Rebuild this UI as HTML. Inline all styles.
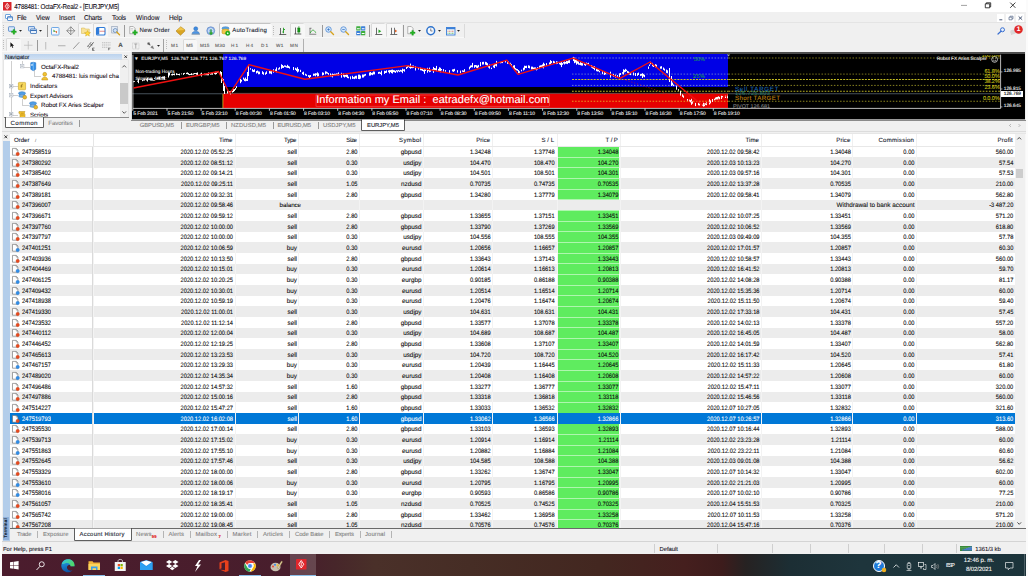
<!DOCTYPE html>
<html><head><meta charset="utf-8"><title>4788481: OctaFX-Real2 - [EURJPY,M5]</title>
<style>
html,body{margin:0;padding:0;width:1028px;height:576px;overflow:hidden;background:#f0f0f0}
body{position:relative;font-family:"Liberation Sans",sans-serif;text-rendering:geometricPrecision}
span{position:absolute;white-space:pre;-webkit-text-stroke:0.09px}
svg{position:absolute;overflow:visible}
</style></head><body>
<div style="position:absolute;left:0.00px;top:0.00px;width:1028.00px;height:12.00px;background:#fff;"></div>
<svg style="left:3px;top:1.5px" width="8.5" height="8.5" viewBox="0 0 17 17"><rect width="17" height="17" rx="1" fill="#d8262c"/><path d="M8.5 2.5 L12.5 8.5 L8.5 14.5 L4.5 8.5 Z" fill="none" stroke="#fff" stroke-width="1.6"/><path d="M8.5 5.5 L8.5 11.5" stroke="#fff" stroke-width="1.4"/></svg>
<span style="left:14.30px;top:3.50px;font-size:6.3px;line-height:8px;color:#15101c;transform:scaleY(1.13);letter-spacing:-0.203px;">4788481: OctaFX-Real2 - [EURJPY,M5]</span>
<svg style="left:955px;top:0" width="73" height="12" viewBox="0 0 73 12"><path d="M6 5.4h6" stroke="#8a8a8a" stroke-width="0.8"/><path d="M30.3 3.8h4.4v4h-4.4z M31.3 3.8v-1h4.4v4h-1" fill="none" stroke="#111" stroke-width="0.8"/><path d="M55.2 2.6l5.2 5.2M60.4 2.6l-5.2 5.2" stroke="#111" stroke-width="0.8"/></svg>
<div style="position:absolute;left:0.00px;top:12.00px;width:1028.00px;height:10.50px;background:#f0f0f0;"></div>
<div style="position:absolute;left:0.00px;top:22.20px;width:1028.00px;height:0.60px;background:#e4e4e4;"></div>
<svg style="left:4.5px;top:13.5px" width="8" height="7" viewBox="0 0 16 14"><rect x="1" y="1" width="10" height="8" rx="1" fill="#fff" stroke="#4f8fd6" stroke-width="1.6"/><rect x="5" y="5" width="10" height="8" rx="1" fill="#fff" stroke="#3b78c4" stroke-width="1.6"/><path d="M5 7.5h10" stroke="#3b78c4" stroke-width="1.6"/></svg>
<span style="left:17.00px;top:15.20px;font-size:6.5px;line-height:8px;color:#15101c;transform:scaleY(1.08);letter-spacing:-0.258px;">File</span>
<span style="left:36.00px;top:15.20px;font-size:6.5px;line-height:8px;color:#15101c;transform:scaleY(1.08);letter-spacing:-0.124px;">View</span>
<span style="left:59.00px;top:15.20px;font-size:6.5px;line-height:8px;color:#15101c;transform:scaleY(1.08);letter-spacing:-0.051px;">Insert</span>
<span style="left:84.00px;top:15.20px;font-size:6.5px;line-height:8px;color:#15101c;transform:scaleY(1.08);letter-spacing:-0.229px;">Charts</span>
<span style="left:112.00px;top:15.20px;font-size:6.5px;line-height:8px;color:#15101c;transform:scaleY(1.08);letter-spacing:-0.294px;">Tools</span>
<span style="left:136.00px;top:15.20px;font-size:6.5px;line-height:8px;color:#15101c;transform:scaleY(1.08);letter-spacing:0.076px;">Window</span>
<span style="left:169.00px;top:15.20px;font-size:6.5px;line-height:8px;color:#15101c;transform:scaleY(1.08);letter-spacing:-0.123px;">Help</span>
<div style="position:absolute;left:996.50px;top:13.50px;width:7.80px;height:8.00px;background:#fff;"></div>
<div style="position:absolute;left:1006.20px;top:13.50px;width:7.80px;height:8.00px;background:#fff;"></div>
<div style="position:absolute;left:1016.00px;top:13.50px;width:7.80px;height:8.00px;background:#fff;"></div>
<svg style="left:996.5px;top:13.5px" width="28" height="8" viewBox="0 0 28 8"><path d="M2.3 5.8h3" stroke="#3a4a6a" stroke-width="0.9"/><path d="M12 3.2h3v2.6h-3z M13 3.2v-1h3v2.6h-1" fill="none" stroke="#5a6a8a" stroke-width="0.7"/><path d="M21.6 2.4l3.6 3.4M25.2 2.4l-3.6 3.4" stroke="#3a4a6a" stroke-width="0.9"/></svg>
<div style="position:absolute;left:0.00px;top:23.20px;width:1028.00px;height:29.00px;background:#f0f0f0;"></div>
<div style="position:absolute;left:3px;top:25px;width:1px;height:11px;background:repeating-linear-gradient(#bcbcbc 0 1px,transparent 1px 2.1px)"></div>
<div style="position:absolute;left:3px;top:40px;width:1px;height:10px;background:repeating-linear-gradient(#bcbcbc 0 1px,transparent 1px 2.1px)"></div>
<div style="position:absolute;left:79.00px;top:24.30px;width:13.00px;height:12.60px;background:#f7f7f7;box-shadow:-0.5px -0.5px 0 0 #c4c4c4,0.5px 0.5px 0 0 #fdfdfd;"></div>
<div style="position:absolute;left:94.00px;top:24.30px;width:12.60px;height:12.60px;background:#f7f7f7;box-shadow:-0.5px -0.5px 0 0 #c4c4c4,0.5px 0.5px 0 0 #fdfdfd;"></div>
<div style="position:absolute;left:290.50px;top:24.30px;width:13.50px;height:12.60px;background:#f7f7f7;box-shadow:-0.5px -0.5px 0 0 #c4c4c4,0.5px 0.5px 0 0 #fdfdfd;"></div>
<div style="position:absolute;left:371.50px;top:24.30px;width:13.50px;height:12.60px;background:#f7f7f7;box-shadow:-0.5px -0.5px 0 0 #c4c4c4,0.5px 0.5px 0 0 #fdfdfd;"></div>
<div style="position:absolute;left:387.00px;top:24.30px;width:13.50px;height:12.60px;background:#f7f7f7;box-shadow:-0.5px -0.5px 0 0 #c4c4c4,0.5px 0.5px 0 0 #fdfdfd;"></div>
<div style="position:absolute;left:6.50px;top:39.00px;width:13.00px;height:12.00px;background:#f7f7f7;box-shadow:-0.5px -0.5px 0 0 #c4c4c4,0.5px 0.5px 0 0 #fdfdfd;"></div>
<div style="position:absolute;left:183.50px;top:39.50px;width:12.60px;height:11.50px;background:#f7f7f7;box-shadow:-0.5px -0.5px 0 0 #c4c4c4,0.5px 0.5px 0 0 #fdfdfd;"></div>
<div style="position:absolute;left:46.50px;top:25.00px;width:0.60px;height:11.50px;background:#9a9a9a;"></div>
<div style="position:absolute;left:124.40px;top:25.00px;width:0.60px;height:11.50px;background:#9a9a9a;"></div>
<div style="position:absolute;left:321.50px;top:25.00px;width:0.60px;height:11.50px;background:#9a9a9a;"></div>
<div style="position:absolute;left:368.50px;top:25.00px;width:0.60px;height:11.50px;background:#9a9a9a;"></div>
<div style="position:absolute;left:402.50px;top:25.00px;width:0.60px;height:11.50px;background:#9a9a9a;"></div>
<div style="position:absolute;left:36.50px;top:39.50px;width:0.60px;height:11.00px;background:#9a9a9a;"></div>
<div style="position:absolute;left:302.50px;top:38.50px;width:0.60px;height:14.00px;background:#b0b0b0;"></div>
<div style="position:absolute;left:463.50px;top:24.00px;width:0.60px;height:13.50px;background:#dadada;"></div>
<div style="position:absolute;left:273px;top:25.5px;width:1px;height:10.5px;background:repeating-linear-gradient(#bcbcbc 0 1px,transparent 1px 2.1px)"></div>
<div style="position:absolute;left:166px;top:40px;width:1px;height:10px;background:repeating-linear-gradient(#bcbcbc 0 1px,transparent 1px 2.1px)"></div>
<div style="position:absolute;left:163.30px;top:38.50px;width:0.60px;height:13.50px;background:#a0a0a0;"></div>
<div style="position:absolute;left:0.00px;top:51.30px;width:131.00px;height:0.60px;background:#f9f9f9;"></div>
<div style="position:absolute;left:219.50px;top:24.30px;width:51.00px;height:12.60px;background:#fafafa;box-shadow:-0.6px -0.6px 0 0 #a8a8a8,0.5px 0.5px 0 0 #fff;"></div>
<div style="position:absolute;left:0.00px;top:37.30px;width:464.00px;height:0.60px;background:#f8f8f8;"></div>
<svg style="left:19.0px;top:30.2px" width="3" height="1.8" viewBox="0 0 6 3.6"><path d="M0 0h6l-3 3.6z" fill="#222"/></svg>
<svg style="left:39.0px;top:30.2px" width="3" height="1.8" viewBox="0 0 6 3.6"><path d="M0 0h6l-3 3.6z" fill="#222"/></svg>
<svg style="left:418.0px;top:30.2px" width="3" height="1.8" viewBox="0 0 6 3.6"><path d="M0 0h6l-3 3.6z" fill="#222"/></svg>
<svg style="left:437.5px;top:30.2px" width="3" height="1.8" viewBox="0 0 6 3.6"><path d="M0 0h6l-3 3.6z" fill="#222"/></svg>
<svg style="left:457.0px;top:30.2px" width="3" height="1.8" viewBox="0 0 6 3.6"><path d="M0 0h6l-3 3.6z" fill="#222"/></svg>
<svg style="left:157.0px;top:45.2px" width="3" height="1.8" viewBox="0 0 6 3.6"><path d="M0 0h6l-3 3.6z" fill="#222"/></svg>
<svg style="left:8px;top:26px" width="9.5" height="9" viewBox="0 0 19.0 18.0"><rect x="1" y="1.5" width="12" height="9" rx="1" fill="#dbe9fa" stroke="#4a82c8" stroke-width="1.6"/><path d="M7 10h3.2v-3.2h3.2v3.2h3.2v3.2h-3.2v3.2h-3.2v-3.2h-3.2z" fill="#22b422" stroke="#0d8a0d" stroke-width="0.6"/></svg>
<svg style="left:28px;top:26px" width="9.5" height="9" viewBox="0 0 19.0 18.0"><rect x="1" y="1" width="12" height="9" rx="1" fill="#cfe0f6" stroke="#4a82c8" stroke-width="1.6"/><rect x="5" y="6" width="12" height="9" rx="1" fill="#eaf2fc" stroke="#3a72b8" stroke-width="1.6"/><path d="M5 9h12" stroke="#3a72b8" stroke-width="2"/></svg>
<svg style="left:51.3px;top:26.5px" width="8.5" height="8.5" viewBox="0 0 17.0 17.0"><rect x="1" y="1" width="15" height="15" rx="1.5" fill="#f4f8fd" stroke="#6fa8e6" stroke-width="2"/><path d="M5 5l4 4-4 1z" fill="#2e9e2e"/><path d="M12 13l-4-4 4-1z" fill="#e0642a"/></svg>
<svg style="left:66px;top:26px" width="9.5" height="9.5" viewBox="0 0 19.0 19.0"><path d="M9.500 1.500L17.500 9.500L9.500 17.500L1.500 9.500Z" fill="#f4f4f4" stroke="#666" stroke-width="1.3"/><path d="M9.500 1.500v16M1.500 9.500h16" stroke="#555" stroke-width="1.1"/></svg>
<svg style="left:80.5px;top:25.5px" width="10" height="10.5" viewBox="0 0 20.0 21.0"><path d="M1 4h6l1.500 2h8v9h-15.500z" fill="#f8e29a" stroke="#d4b448" stroke-width="1"/><path d="M13 9l1.800 3.800 4.200 0.500-3.100 2.800 0.900 4.100-3.800-2.100-3.800 2.100 0.900-4.100-3.100-2.800 4.200-0.500z" fill="#ffd93b" stroke="#c79a12" stroke-width="0.8"/></svg>
<svg style="left:95.5px;top:26.5px" width="9.5" height="8.5" viewBox="0 0 19.0 17.0"><rect x="1" y="1" width="17" height="15" rx="2" fill="#fff" stroke="#2f7bd8" stroke-width="2.2"/><rect x="2" y="2" width="4.500" height="13" fill="#2f7bd8"/><path d="M7 8.500h11" stroke="#d04040" stroke-width="1.2"/></svg>
<svg style="left:111px;top:26px" width="9.5" height="9.5" viewBox="0 0 19.0 19.0"><rect x="1.500" y="1" width="11" height="13" fill="#e4ecf6" stroke="#8a9ab0" stroke-width="1.2"/><circle cx="8.500" cy="9" r="4" fill="#cfe2f8" stroke="#5a7fb0" stroke-width="1.4"/><path d="M11.500 12l5.500 5.500" stroke="#d6a21e" stroke-width="2.600" stroke-linecap="round"/></svg>
<svg style="left:129px;top:25.8px" width="9.5" height="10" viewBox="0 0 19.0 20.0"><path d="M1.500 1h7l3.500 3.500v11h-10.500z" fill="#fafafa" stroke="#8a8a8a" stroke-width="1.2"/><path d="M3.500 5h5M3.500 8h5" stroke="#aaa" stroke-width="1"/><path d="M7.2 11.5h3.2v-3.2h3.2v3.2h3.2v3.2h-3.2v3.2h-3.2v-3.2h-3.2z" fill="#22b422" stroke="#0d8a0d" stroke-width="0.6"/></svg>
<span style="left:139.60px;top:26.80px;font-size:6.0px;line-height:8px;color:#15202c;letter-spacing:0.149px;">New Order</span>
<svg style="left:176px;top:26px" width="9.5" height="9" viewBox="0 0 19.0 18.0"><path d="M1 9l8.500-7.500 8 6-8.500 8z" fill="#f2c64a" stroke="#b98a14" stroke-width="1.2"/><path d="M1 9l0 2.500 8 7 8.500-8 0-2.500" fill="#d9a523" stroke="#a87910" stroke-width="1"/></svg>
<svg style="left:191px;top:26px" width="9.5" height="9.5" viewBox="0 0 19.0 19.0"><circle cx="9.500" cy="5.500" r="4" fill="#3d8be0" stroke="#2767b5" stroke-width="1"/><path d="M2.500 14.500c0-5 14-5 14 0v1.500h-14z" fill="#4a95e6" stroke="#2767b5" stroke-width="1"/><path d="M1 16.500h17" stroke="#9ab" stroke-width="2.400"/></svg>
<svg style="left:206px;top:26px" width="9.5" height="9.5" viewBox="0 0 19.0 19.0"><circle cx="9.500" cy="9.500" r="8" fill="#8fb4e8" stroke="#5a82c0" stroke-width="1.2"/><circle cx="9.500" cy="9.500" r="4.500" fill="none" stroke="#eaf2fc" stroke-width="1.6"/><path d="M10 7v9M7 13l3 3.500 3-3.500" stroke="#2fa52f" stroke-width="2.400" fill="none"/></svg>
<svg style="left:221px;top:25.8px" width="9.5" height="10" viewBox="0 0 19.0 20.0"><ellipse cx="9" cy="4.500" rx="7" ry="3" fill="#58a6e8" stroke="#2a6eb5" stroke-width="1"/><path d="M2 8c0-2.500 14-2.500 14 0v6c0 2.500-14 2.500-14 0z" fill="#f0c84a" stroke="#b98a14" stroke-width="1"/><circle cx="13.500" cy="14.500" r="4.500" fill="#22b422" stroke="#0d8a0d" stroke-width="0.8"/><path d="M12 12.300l4 2.200-4 2.200z" fill="#fff"/></svg>
<span style="left:232.20px;top:26.80px;font-size:6.0px;line-height:8px;color:#15202c;letter-spacing:0.213px;">AutoTrading</span>
<svg style="left:279px;top:26.5px" width="7.5" height="8.5" viewBox="0 0 15.0 17.0"><path d="M3 2v13M0.500 15h14" stroke="#444" stroke-width="1.6"/><path d="M9 1.500v11M9 5h3M6.500 10h2.500" stroke="#1e9a1e" stroke-width="1.800"/></svg>
<svg style="left:293.5px;top:26px" width="7.5" height="9" viewBox="0 0 15.0 18.0"><path d="M3 3v13M0.500 16h14" stroke="#444" stroke-width="1.6"/><rect x="7.500" y="4" width="4.500" height="8" fill="#22a822" stroke="#0d7a0d" stroke-width="0.8"/><path d="M9.750 0.500v15" stroke="#0d7a0d" stroke-width="1.4"/></svg>
<svg style="left:309px;top:27px" width="7.5" height="8" viewBox="0 0 15.0 16.0"><path d="M1 2.500h4M2 2.500v11M0.500 14.500h14" stroke="#555" stroke-width="1.4"/><path d="M2.500 12c3-7 7-8 11-0.500" stroke="#2fa52f" stroke-width="1.700" fill="none"/></svg>
<svg style="left:325px;top:26px" width="9.5" height="9.5" viewBox="0 0 19.0 19.0"><circle cx="7" cy="7" r="5.500" fill="#d4e6fa" stroke="#4f8ad4" stroke-width="1.600"/><path d="M4.500 7h5" stroke="#2a6cc0" stroke-width="1.4"/><path d="M7 4.500v5" stroke="#2a6cc0" stroke-width="1.4"/><path d="M11.500 11.500l5.500 5.500" stroke="#d6a21e" stroke-width="2.800" stroke-linecap="round"/></svg>
<svg style="left:340px;top:26px" width="9.5" height="9.5" viewBox="0 0 19.0 19.0"><circle cx="7" cy="7" r="5.500" fill="#d4e6fa" stroke="#4f8ad4" stroke-width="1.600"/><path d="M4.500 7h5" stroke="#2a6cc0" stroke-width="1.4"/><path d="M11.500 11.500l5.500 5.500" stroke="#d6a21e" stroke-width="2.800" stroke-linecap="round"/></svg>
<svg style="left:355.5px;top:26px" width="9.5" height="9.5" viewBox="0 0 19.0 19.0"><rect x="0.5" y="0.500" width="8.500" height="8.500" rx="1" fill="#3fae3f"/><rect x="10" y="0.500" width="8.500" height="8.500" rx="1" fill="#3a7fd8"/><rect x="0.5" y="10" width="8.500" height="8.500" rx="1" fill="#3a7fd8"/><rect x="10" y="10" width="8.500" height="8.500" rx="1" fill="#3fae3f"/><path d="M2 5.500h5.500M11.500 5.500h5.500M2 15h5.500M11.500 15h5.500" stroke="#fff" stroke-width="2.200"/></svg>
<svg style="left:374.5px;top:26.5px" width="7.5" height="8.5" viewBox="0 0 15.0 17.0"><path d="M3 1.500v13M0.500 15h14" stroke="#444" stroke-width="1.600"/><path d="M7 5l5.500 3.500-5.500 3.500z" fill="#22a822"/></svg>
<svg style="left:390px;top:26.5px" width="7.5" height="8.5" viewBox="0 0 15.0 17.0"><path d="M3 1.500v13M0.500 15h14M9 1.500v13" stroke="#444" stroke-width="1.500"/><path d="M10 5l4.500 3-4.500 3z" fill="#e0642a"/></svg>
<svg style="left:407px;top:25.8px" width="9.5" height="10.5" viewBox="0 0 19.0 21.0"><path d="M1.500 1h7l3.500 3.500v11h-10.500z" fill="#fafafa" stroke="#8a8a8a" stroke-width="1.2"/><path d="M6.5 12h3.2v-3.2h3.2v3.2h3.2v3.2h-3.2v3.2h-3.2v-3.2h-3.2z" fill="#22b422" stroke="#0d8a0d" stroke-width="0.6"/></svg>
<svg style="left:426px;top:26px" width="9.5" height="9.5" viewBox="0 0 19.0 19.0"><circle cx="9.500" cy="9.500" r="7.800" fill="#f4f8fd" stroke="#2f73cc" stroke-width="3"/><path d="M9.500 5v5h3.500" stroke="#445" stroke-width="1.300" fill="none"/></svg>
<svg style="left:446px;top:26.5px" width="9.5" height="8.5" viewBox="0 0 19.0 17.0"><rect x="1" y="1" width="17" height="15" fill="#f2f6fb" stroke="#3a7fd8" stroke-width="1.800"/><rect x="1" y="1" width="17" height="3.500" fill="#3a7fd8"/><path d="M3 8.500h13" stroke="#d05030" stroke-width="1.300" stroke-dasharray="2 1"/><path d="M3 12.500h13" stroke="#2fa52f" stroke-width="1.300" stroke-dasharray="2 1"/></svg>
<svg style="left:10.3px;top:41.8px" width="4.2" height="6.8" viewBox="0 0 10 16"><path d="M1 0.500v12l3-2.800 2 4.500 1.800-0.800-2-4.400h4z" fill="#111"/></svg>
<svg style="left:24px;top:41px" width="8.5" height="8.5" viewBox="0 0 17.0 17.0"><path d="M8.500 0v17M0 8.500h17" stroke="#b4b4b4" stroke-width="1.300"/></svg>
<svg style="left:45px;top:41.5px" width="1.5" height="7.5" viewBox="0 0 3.0 15.0"><path d="M1.500 0v15" stroke="#aaa" stroke-width="1.500"/></svg>
<svg style="left:58px;top:44.5px" width="7.5" height="1.5" viewBox="0 0 15.0 3.0"><path d="M0 1.500h15" stroke="#999" stroke-width="1.500"/></svg>
<svg style="left:73px;top:42px" width="6.5" height="7" viewBox="0 0 13.0 14.0"><path d="M0.500 13.500l12-13" stroke="#777" stroke-width="1.500"/></svg>
<svg style="left:86.8px;top:41px" width="8" height="9.5" viewBox="0 0 16.0 19.0"><path d="M0.500 12l8-10M3 15l9-11M6.500 11l7-9M2 9l3 3M6 5l4 4" stroke="#555" stroke-width="1.300"/><path d="M11 14h4M11 16.500h3M11 19h4M11 14v5" stroke="#333" stroke-width="1.100"/></svg>
<svg style="left:102px;top:41.5px" width="8.5" height="8" viewBox="0 0 17.0 16.0"><path d="M0 1.500h17M0 6h17M0 10.500h13" stroke="#999" stroke-width="1.200" stroke-dasharray="2.500 1.200"/><path d="M13 12h4M13 12v4.500M13 14h3" stroke="#444" stroke-width="1"/></svg>
<span style="left:118.20px;top:42.20px;font-size:6.2px;line-height:8px;color:#505050;font-weight:bold;">A</span>
<svg style="left:132px;top:41.5px" width="7.5" height="8" viewBox="0 0 15.0 16.0"><rect x="1" y="2" width="13" height="12" fill="none" stroke="#bbb" stroke-width="1.200" stroke-dasharray="1.500 1"/><path d="M4.500 4h6M7.500 4v9" stroke="#888" stroke-width="1.300"/></svg>
<svg style="left:147px;top:42px" width="7.5" height="7" viewBox="0 0 15.0 14.0"><path d="M1 1l5 5M4 0.500l2.500 6-6-2.500z" fill="#555" stroke="#555" stroke-width="0.800"/><path d="M8 8l5 5M11 7.500l2.500 6-6-2.500z" fill="#777" stroke="#777" stroke-width="0.800"/></svg>
<span style="left:171.00px;top:42.20px;font-size:4.7px;line-height:8px;color:#555;letter-spacing:0.471px;">M1</span>
<span style="left:186.30px;top:42.20px;font-size:4.7px;line-height:8px;color:#555;letter-spacing:0.171px;">M5</span>
<span style="left:200.00px;top:42.20px;font-size:4.7px;line-height:8px;color:#555;letter-spacing:0.178px;">M15</span>
<span style="left:215.00px;top:42.20px;font-size:4.7px;line-height:8px;color:#555;letter-spacing:0.428px;">M30</span>
<span style="left:231.00px;top:42.20px;font-size:4.7px;line-height:8px;color:#555;letter-spacing:0.992px;">H1</span>
<span style="left:246.00px;top:42.20px;font-size:4.7px;line-height:8px;color:#555;letter-spacing:0.992px;">H4</span>
<span style="left:261.00px;top:42.20px;font-size:4.7px;line-height:8px;color:#555;letter-spacing:0.992px;">D1</span>
<span style="left:276.00px;top:42.20px;font-size:4.7px;line-height:8px;color:#555;letter-spacing:0.450px;">W1</span>
<span style="left:290.00px;top:42.20px;font-size:4.7px;line-height:8px;color:#555;letter-spacing:0.690px;">MN</span>
<svg style="left:997px;top:27px" width="8.5" height="7.5" viewBox="0 0 17.0 15.0"><circle cx="11" cy="5.500" r="4" fill="#e6f0fc" stroke="#3a6fd0" stroke-width="2"/><path d="M8 8.500l-6 5.500" stroke="#3a6fd0" stroke-width="2.400" stroke-linecap="round"/></svg>
<svg style="left:1010px;top:25px" width="14" height="10.5" viewBox="0 0 28.0 21.0"><ellipse cx="6" cy="14" rx="5.500" ry="4.500" fill="#d8d8d8"/><path d="M3 17l-1.500 3.500 4-2z" fill="#d0d0d0"/><circle cx="17" cy="9" r="8.500" fill="#e02828"/></svg>
<span style="left:918.50px;width:200px;text-align:center;top:26.10px;font-size:6.5px;line-height:8px;color:#fff;font-weight:bold;">1</span>
<div style="position:absolute;left:2.00px;top:52.00px;width:128.00px;height:78.00px;background:#f0f0f0;"></div>
<div style="position:absolute;left:130.60px;top:52.00px;width:0.60px;height:78.00px;background:#dcdcdc;"></div>
<div style="position:absolute;left:4.00px;top:53.50px;width:117.50px;height:6.70px;background:linear-gradient(#bcd3ee,#d3e2f4);"></div>
<span style="left:5.00px;top:53.60px;font-size:5.9px;line-height:8px;color:#15202c;letter-spacing:-0.081px;">Navigator</span>
<svg style="left:123.8px;top:54.8px" width="3.4" height="3.4" viewBox="0 0 6.8 6.8"><path d="M0.800 0.800l5.200 5.200M6 0.800l-5.200 5.200" stroke="#111" stroke-width="1.500"/></svg>
<div style="position:absolute;left:4.00px;top:60.20px;width:124.30px;height:57.00px;background:#fff;box-shadow:0 0 0 0.5px #dadada;"></div>
<div style="position:absolute;left:119.60px;top:60.40px;width:8.60px;height:56.60px;background:#f0f0f0;"></div>
<div style="position:absolute;left:120.00px;top:83.20px;width:7.60px;height:20.40px;background:#c9c9c9;"></div>
<svg style="left:121.6px;top:65px" width="4.5" height="2.8" viewBox="0 0 9.0 5.6"><path d="M0.800 4.800l3.700-3.800 3.700 3.800" fill="none" stroke="#4a4a4a" stroke-width="1.800"/></svg>
<svg style="left:121.6px;top:111.3px" width="4.5" height="2.8" viewBox="0 0 9.0 5.6"><path d="M0.800 0.800l3.700 3.800 3.700-3.800" fill="none" stroke="#4a4a4a" stroke-width="1.800"/></svg>
<div style="position:absolute;left:11px;top:60.5px;width:0.5px;height:56.5px;background:#cfcfcf"></div>
<div style="position:absolute;left:22px;top:60.5px;width:0.5px;height:6px;background:#cfcfcf"></div>
<div style="position:absolute;left:23.5px;top:66.5px;width:6px;height:0.5px;background:#cfcfcf"></div>
<div style="position:absolute;left:33.5px;top:70px;width:0.5px;height:6.5px;background:#cfcfcf"></div>
<div style="position:absolute;left:33.5px;top:76.3px;width:7px;height:0.5px;background:#cfcfcf"></div>
<div style="position:absolute;left:12.5px;top:85.7px;width:5px;height:0.5px;background:#cfcfcf"></div>
<div style="position:absolute;left:12.5px;top:95.3px;width:5px;height:0.5px;background:#cfcfcf"></div>
<div style="position:absolute;left:22px;top:98.5px;width:0.5px;height:6.5px;background:#cfcfcf"></div>
<div style="position:absolute;left:22px;top:104.8px;width:6.5px;height:0.5px;background:#cfcfcf"></div>
<div style="position:absolute;left:12.5px;top:114.5px;width:5px;height:0.5px;background:#cfcfcf"></div>
<svg style="left:19.9px;top:64.4px" width="4.2" height="4.2" viewBox="0 0 8 8"><rect x="0.500" y="0.500" width="7" height="7" fill="#fff" stroke="#9aa4b4" stroke-width="0.900"/><path d="M2 4h4" stroke="#345" stroke-width="0.900"/></svg>
<svg style="left:8.9px;top:83.60000000000001px" width="4.2" height="4.2" viewBox="0 0 8 8"><rect x="0.500" y="0.500" width="7" height="7" fill="#fff" stroke="#9aa4b4" stroke-width="0.900"/><path d="M2 4h4" stroke="#345" stroke-width="0.900"/><path d="M4 2v4" stroke="#345" stroke-width="0.900"/></svg>
<svg style="left:8.9px;top:93.2px" width="4.2" height="4.2" viewBox="0 0 8 8"><rect x="0.500" y="0.500" width="7" height="7" fill="#fff" stroke="#9aa4b4" stroke-width="0.900"/><path d="M2 4h4" stroke="#345" stroke-width="0.900"/></svg>
<svg style="left:8.9px;top:112.4px" width="4.2" height="4.2" viewBox="0 0 8 8"><rect x="0.500" y="0.500" width="7" height="7" fill="#fff" stroke="#9aa4b4" stroke-width="0.900"/><path d="M2 4h4" stroke="#345" stroke-width="0.900"/><path d="M4 2v4" stroke="#345" stroke-width="0.900"/></svg>
<svg style="left:30px;top:62px" width="6.5" height="9" viewBox="0 0 13.0 18.0"><path d="M1.500 1.500l5-1 5 1v13l-5 3-5-3z" fill="#2f8ee8" stroke="#1d66b8" stroke-width="1"/><path d="M6.500 0.500v17" stroke="#8cc4f6" stroke-width="1.500"/><path d="M2.500 4l3-0.500v4l-3 0.500z" fill="#bfe0fb"/></svg>
<svg style="left:41px;top:72px" width="7.5" height="8.5" viewBox="0 0 15.0 17.0"><circle cx="7.500" cy="4.500" r="3.800" fill="#f2c230" stroke="#b98a14" stroke-width="1"/><path d="M1.500 16c0-8 12-8 12 0z" fill="#f2c230" stroke="#b98a14" stroke-width="1"/></svg>
<svg style="left:18px;top:81.5px" width="8" height="8.2" viewBox="0 0 16.0 16.4"><rect x="0.800" y="0.800" width="14.400" height="14.800" rx="1.500" fill="#f6d75a" stroke="#c9a227" stroke-width="1.200"/><path d="M9.500 4.500c-2.500-0.800-2.500 1-3 7M5 8h4" stroke="#7a5a10" stroke-width="1.200" fill="none"/></svg>
<svg style="left:18px;top:91px" width="9.5" height="8.5" viewBox="0 0 19.0 17.0"><ellipse cx="8" cy="4.500" rx="7" ry="3.200" fill="#4f9ee8" stroke="#2a6eb5" stroke-width="1"/><path d="M2.500 7c0 3 11 3 11 0l1 3.500c0 3-13 3-13 0z" fill="#6aaeea" stroke="#2a6eb5" stroke-width="0.800"/><circle cx="13.500" cy="12.500" r="3.800" fill="#e8b830" stroke="#a87910" stroke-width="0.800"/></svg>
<svg style="left:29px;top:100.5px" width="9.5" height="8.5" viewBox="0 0 19.0 17.0"><ellipse cx="8" cy="4.500" rx="7" ry="3.200" fill="#4f9ee8" stroke="#2a6eb5" stroke-width="1"/><path d="M2.500 7c0 3 11 3 11 0l1 3.500c0 3-13 3-13 0z" fill="#6aaeea" stroke="#2a6eb5" stroke-width="0.800"/><circle cx="13.500" cy="12.500" r="3.800" fill="#e8b830" stroke="#a87910" stroke-width="0.800"/></svg>
<svg style="left:18px;top:110.5px" width="8.5" height="6.7" viewBox="0 0 17 13.4"><path d="M2 1h12c-1.500 2-1.500 4 0 6v6.400h-10v-6.400c-2-2-3-4-2-6z" fill="#f2c230" stroke="#b98a14" stroke-width="1"/><path d="M5.500 4.500h6M5.500 8h6" stroke="#a87910" stroke-width="1"/></svg>
<span style="left:41.00px;top:63.80px;font-size:6.2px;line-height:8px;color:#1b1020;letter-spacing:-0.116px;">OctaFX-Real2</span>
<span style="left:52.00px;top:73.40px;font-size:6.2px;line-height:8px;color:#1b1020;letter-spacing:-0.069px;">4788481: luis miguel cha</span>
<span style="left:30.00px;top:83.00px;font-size:6.2px;line-height:8px;color:#1b1020;letter-spacing:0.047px;">Indicators</span>
<span style="left:30.00px;top:92.60px;font-size:6.2px;line-height:8px;color:#1b1020;letter-spacing:-0.005px;">Expert Advisors</span>
<span style="left:41.00px;top:102.10px;font-size:6.2px;line-height:8px;color:#1b1020;letter-spacing:-0.069px;">Robot FX Aries Scalper</span>
<span style="left:30.00px;top:111.60px;font-size:6.2px;line-height:8px;color:#1b1020;clip-path:inset(0 0 3.2px 0);letter-spacing:-0.075px;">Scripts</span>
<div style="position:absolute;left:4.00px;top:117.30px;width:124.50px;height:0.60px;background:#8a8a8a;"></div>
<div style="position:absolute;left:5.50px;top:117.00px;width:37.50px;height:10.40px;background:#fff;box-shadow:0 0 0 0.700px #222;clip-path:inset(0.3px -2px -2px -2px);"></div>
<span style="left:10.50px;top:119.60px;font-size:6.2px;line-height:8px;color:#15202c;letter-spacing:0.370px;">Common</span>
<span style="left:48.20px;top:119.60px;font-size:6.2px;line-height:8px;color:#8a8a8a;letter-spacing:-0.087px;">Favorites</span>
<div style="position:absolute;left:79.30px;top:119.50px;width:0.70px;height:7.50px;background:#999;"></div>
<div style="position:absolute;left:131.60px;top:52.20px;width:893.40px;height:66.50px;background:#000;"></div>
<div style="position:absolute;left:131.60px;top:52.20px;width:893.40px;height:2.30px;background:#4c4c4c;"></div>
<div style="position:absolute;left:131.60px;top:118.60px;width:893.40px;height:0.80px;background:#9a9a9a;"></div>
<div style="position:absolute;left:222.80px;top:54.40px;width:505.70px;height:33.00px;background:#0000e6;"></div>
<div style="position:absolute;left:222.80px;top:93.60px;width:505.70px;height:14.20px;background:#e60000;"></div>
<svg style="left:0;top:0" width="1028" height="130" viewBox="0 0 1028 130"><path d="M132.3 93.750H222.800M728.500 93.750H1000.600" stroke="#46505a" stroke-width="1.100"/><path d="M222.800 93.400H728.500" stroke="#e87070" stroke-width="0.600"/><path d="M222.900 94v14" stroke="#d8c020" stroke-width="0.8"/><path d="M132.900 54.700V108.400H1000.600V54.700" fill="none" stroke="#e8e8e8" stroke-width="0.8"/><path d="M572 58H728.500" stroke="#6f7fd0" stroke-width="1" stroke-dasharray="1.5 1.6"/><path d="M728.500 58H1000" stroke="#807a1c" stroke-width="1" stroke-dasharray="1.5 1.6"/><path d="M572 74.1H728.500" stroke="#6070d0" stroke-width="1" stroke-dasharray="1.5 1.6"/><path d="M728.500 74.1H1000" stroke="#7a741c" stroke-width="1" stroke-dasharray="1.5 1.6"/><path d="M572 79.5H728.500" stroke="#d0c820" stroke-width="1" stroke-dasharray="2 1.1"/><path d="M728.500 79.5H1000" stroke="#c8c020" stroke-width="1" stroke-dasharray="2 1.1"/><path d="M572 85.4H728.500" stroke="#6f7fd0" stroke-width="1" stroke-dasharray="1.5 1.6"/><path d="M728.500 85.4H1000" stroke="#868020" stroke-width="1" stroke-dasharray="1.5 1.6"/><path d="M572 91.25H728.500" stroke="#c0b820" stroke-width="1" stroke-dasharray="1.7 1.4"/><path d="M728.500 91.25H1000" stroke="#b8b020" stroke-width="1" stroke-dasharray="1.7 1.4"/><path d="M572 101.25H728.500" stroke="#e89820" stroke-width="1" stroke-dasharray="1.5 1.6"/><path d="M728.500 101.25H1000" stroke="#8a841c" stroke-width="1" stroke-dasharray="1.5 1.6"/><path d="M133.5 81.3v0.9M134.5 81.0v0.8M137.5 80.7v1.0M138.5 78.6v4.6M142.5 79.8v1.4M143.5 79.7v0.9M144.5 79.2v1.4M146.5 79.1v1.4M147.5 77.8v3.7M148.5 78.7v0.8M149.5 78.8v1.1M150.5 78.4v1.7M151.5 78.4v1.6M152.5 78.6v1.2M154.5 77.9v0.9M157.5 77.6v1.3M158.5 77.6v1.1M159.5 76.9v2.4M161.5 77.3v0.8M162.5 76.8v1.6M163.5 76.8v1.8M164.5 76.2v3.5M169.5 72.8v2.7M171.5 74.2v1.1M172.5 73.6v1.9M173.5 73.8v1.2M174.5 73.5v1.8M176.5 73.2v1.9M177.5 73.8v1.0M178.5 74.0v1.0M179.5 73.7v1.7M181.5 73.5v0.8M183.5 73.1v1.8M184.5 72.9v1.0M186.5 72.8v1.3M187.5 72.4v1.8M188.5 73.1v1.7M189.5 74.0v1.2M190.5 73.9v1.0M191.5 73.2v1.9M192.5 73.8v0.8M193.5 73.4v1.3M194.5 73.0v1.1M195.5 73.0v0.9M196.5 72.9v1.8M197.5 72.4v3.3M200.5 73.6v1.6M201.5 72.7v3.8M204.5 73.6v1.6M205.5 73.8v1.4M206.5 73.4v1.8M207.5 73.9v1.4M208.5 72.5v2.8M210.5 73.7v1.0M211.5 72.7v1.9M212.5 72.8v1.9M214.5 73.1v1.0M215.5 71.7v2.9M216.5 72.2v1.9M217.5 72.1v0.8M220.5 71.1v3.9M221.5 74.7v3.9M222.5 77.9v3.1M223.5 80.7v5.7M224.5 86.6v2.4M227.5 90.8v2.7M229.5 91.2v2.8M230.5 90.9v3.5M232.5 90.9v1.7M233.5 89.1v2.9M234.5 89.0v2.1M235.5 87.9v2.0M236.5 86.1v2.1M240.5 78.8v4.4M241.5 79.8v1.9M243.5 77.5v2.2M244.5 78.7v2.4M245.5 77.5v3.8M246.5 79.1v1.8M250.5 68.2v1.4M252.5 68.9v2.8M253.5 70.0v2.1M254.5 69.2v2.7M256.5 71.0v2.5M257.5 70.5v2.3M258.5 71.4v2.9M259.5 71.6v2.6M262.5 71.2v2.9M263.5 72.2v2.6M265.5 72.5v2.3M266.5 71.3v2.7M269.5 70.9v2.7M270.5 71.2v2.3M271.5 70.3v3.9M273.5 69.2v3.5M275.5 69.3v2.6M276.5 67.4v5.0M278.5 68.3v1.4M279.5 67.2v2.2M281.5 64.3v4.5M282.5 65.0v2.9M283.5 66.1v1.8M284.5 65.4v1.4M285.5 65.5v1.7M286.5 66.2v1.4M287.5 64.8v3.1M288.5 65.9v2.1M289.5 66.6v2.0M293.5 67.0v3.1M295.5 67.8v2.1M296.5 68.6v2.5M297.5 67.2v5.2M298.5 69.0v2.6M300.5 69.8v2.2M302.5 72.3v1.9M303.5 71.7v3.4M305.5 73.7v1.8M306.5 74.4v1.7M308.5 75.1v1.8M309.5 75.3v2.7M310.5 75.0v2.1M313.5 73.6v2.3M314.5 73.7v1.9M315.5 73.2v3.1M316.5 73.4v1.5M317.5 72.3v4.2M318.5 73.3v2.9M322.5 72.3v3.1M323.5 72.7v2.2M325.5 71.3v3.1M326.5 71.6v1.9M327.5 72.3v1.5M328.5 73.0v1.8M330.5 73.4v3.1M331.5 74.6v1.8M332.5 73.5v3.9M333.5 74.0v1.9M334.5 73.7v1.5M335.5 73.8v1.8M336.5 73.4v1.8M337.5 73.5v1.8M338.5 72.4v3.1M341.5 72.8v4.9M343.5 73.4v3.3M344.5 74.9v2.7M345.5 75.0v1.7M346.5 74.5v2.6M347.5 74.8v3.3M348.5 76.7v1.6M350.5 76.4v2.9M352.5 75.8v3.1M353.5 77.2v1.5M354.5 76.5v2.6M355.5 75.8v2.7M356.5 75.7v3.1M358.5 74.6v4.4M359.5 74.6v4.6M360.5 75.5v3.1M362.5 74.5v3.1M363.5 74.6v2.9M364.5 74.3v2.0M365.5 73.9v1.8M369.5 72.5v3.2M370.5 72.0v3.5M371.5 72.9v1.8M372.5 72.5v2.7M373.5 71.5v2.9M374.5 71.7v2.7M378.5 71.9v2.0M379.5 71.8v1.8M380.5 72.4v1.6M381.5 70.7v4.6M384.5 70.8v3.1M385.5 71.1v1.9M386.5 70.3v2.5M388.5 70.4v1.8M389.5 70.1v3.4M390.5 70.1v2.0M391.5 69.8v3.3M392.5 69.6v4.0M393.5 70.1v2.0M394.5 70.3v2.0M395.5 70.8v2.1M396.5 70.1v1.4M397.5 70.4v2.1M398.5 69.9v1.4M399.5 70.5v1.6M400.5 69.8v1.7M401.5 70.2v1.6M402.5 68.6v4.6M403.5 69.4v1.5M404.5 69.2v2.5M406.5 66.9v2.1M407.5 66.1v1.8M408.5 65.5v1.6M409.5 66.4v1.5M410.5 63.6v5.1M411.5 66.1v2.0M412.5 65.6v2.6M413.5 65.5v2.5M415.5 66.3v4.2M418.5 67.4v2.2M420.5 67.6v2.7M421.5 68.1v2.3M422.5 68.1v2.9M423.5 69.8v1.7M424.5 68.2v5.6M425.5 69.0v2.0M427.5 67.8v4.9M428.5 69.2v1.9M429.5 67.6v4.6M430.5 70.1v1.7M432.5 69.1v2.0M433.5 66.9v6.0M434.5 68.0v2.8M435.5 68.3v2.0M436.5 65.9v5.4M438.5 68.9v2.5M439.5 67.3v3.7M440.5 67.8v4.5M441.5 69.0v1.4M443.5 69.1v2.5M445.5 70.1v1.6M449.5 70.2v2.8M452.5 69.4v2.0M453.5 69.2v2.7M454.5 68.8v2.4M457.5 70.2v2.4M460.5 70.6v2.6M462.5 70.3v1.5M463.5 70.6v1.4M464.5 69.1v2.7M469.5 66.7v2.7M470.5 65.5v2.4M471.5 65.3v1.9M472.5 62.9v4.5M474.5 65.1v2.7M475.5 65.0v1.8M476.5 65.2v2.6M477.5 65.6v2.7M478.5 64.9v2.4M480.5 62.1v4.1M482.5 61.9v2.7M483.5 61.8v2.7M485.5 61.8v2.9M486.5 62.2v3.0M487.5 63.2v2.8M488.5 65.1v2.5M489.5 64.5v4.1M491.5 67.7v1.4M493.5 65.4v2.0M494.5 63.8v4.3M495.5 63.8v2.0M496.5 60.9v5.6M500.5 61.9v1.4M501.5 61.4v1.7M502.5 61.2v1.9M505.5 60.9v1.6M507.5 61.1v2.8M508.5 61.3v2.1M510.5 62.8v1.8M511.5 64.1v2.1M513.5 65.5v2.8M514.5 65.2v4.7M515.5 68.1v1.7M516.5 68.8v1.6M517.5 69.1v1.7M518.5 70.0v3.2M519.5 71.2v1.7M521.5 69.7v1.6M523.5 67.7v2.8M524.5 65.7v4.0M525.5 65.9v2.1M526.5 65.7v2.5M528.5 65.3v2.7M529.5 65.7v2.7M531.5 66.6v2.8M532.5 66.7v2.6M533.5 67.5v1.6M534.5 67.4v2.5M535.5 67.4v2.5M536.5 68.7v1.7M537.5 67.2v2.3M539.5 65.7v2.8M540.5 65.3v2.4M541.5 65.2v2.6M542.5 64.4v3.1M543.5 62.7v5.7M544.5 63.8v1.9M546.5 63.1v2.7M549.5 62.4v2.3M550.5 60.2v4.3M551.5 61.0v2.2M553.5 60.8v2.5M554.5 61.4v1.9M556.5 61.2v2.9M557.5 61.7v2.2M559.5 62.5v1.8M560.5 62.6v2.5M561.5 61.5v5.6M562.5 63.1v1.7M563.5 62.1v1.4M564.5 61.4v3.1M565.5 62.0v1.7M566.5 60.8v3.0M567.5 61.1v3.0M568.5 60.4v2.6M569.5 60.2v3.0M573.5 56.9v4.2M574.5 57.6v5.6M575.5 60.0v2.6M576.5 59.3v5.4M577.5 61.2v2.5M578.5 61.5v3.2M579.5 63.3v1.5M580.5 62.2v3.0M581.5 62.8v2.8M582.5 63.2v2.4M584.5 62.9v2.3M585.5 63.3v2.6M586.5 62.6v1.9M587.5 63.3v1.5M588.5 62.8v1.5M591.5 65.0v2.6M592.5 65.9v2.5M593.5 66.4v2.6M594.5 66.1v4.1M596.5 68.6v2.6M597.5 69.1v2.4M598.5 69.4v2.0M599.5 70.8v1.5M602.5 71.1v3.1M604.5 71.9v3.1M605.5 72.8v1.6M610.5 71.7v5.9M613.5 73.9v2.7M615.5 74.6v2.9M617.5 75.1v2.2M619.5 73.4v3.7M620.5 73.0v2.0M622.5 72.2v1.5M623.5 69.3v5.2M624.5 69.9v2.5M625.5 68.8v3.1M626.5 69.7v1.5M627.5 70.9v2.0M628.5 71.4v2.5M629.5 72.4v2.1M630.5 72.2v2.9M633.5 72.5v2.9M635.5 73.0v3.0M637.5 73.3v2.6M638.5 72.6v2.4M640.5 74.1v1.8M641.5 73.9v1.8M642.5 73.2v4.8M643.5 74.1v2.4M644.5 74.9v2.3M648.5 66.5v2.4M649.5 64.5v1.5M650.5 61.8v2.5M652.5 62.9v3.4M653.5 64.7v2.3M655.5 64.2v3.1M656.5 64.7v3.3M660.5 66.5v2.2M661.5 66.2v2.5M663.5 67.5v2.4M664.5 68.6v2.1M666.5 69.6v3.3M667.5 70.3v3.0M669.5 75.0v2.6M672.5 82.6v2.6M673.5 84.5v1.6M676.5 85.5v4.2M678.5 89.2v1.5M680.5 90.7v4.9M682.5 94.3v2.5M683.5 95.5v2.3M687.5 99.0v1.7M689.5 99.6v1.9M690.5 100.1v2.3M691.5 98.8v6.0M692.5 101.4v2.3M695.5 102.9v3.2M698.5 102.6v2.7M699.5 102.6v2.9M702.5 104.1v1.7M703.5 102.8v3.8M704.5 103.3v2.9M705.5 103.0v1.9M706.5 102.3v2.9M709.5 99.2v5.3M710.5 100.4v3.0M712.5 99.0v3.0M714.5 98.7v1.7M715.5 97.5v2.3M716.5 97.1v2.7M717.5 96.9v2.7M718.5 96.3v3.0M719.5 96.9v2.4M721.5 95.8v3.2M722.5 96.1v1.6M725.5 95.7v2.3M727.5 94.8v3.5M168.500 72.500v5M221.500 72v11M223.500 79v12M224.500 86v8M247.500 72v9M248.500 66v10M669.500 68v14M671.500 76v10" stroke="#fff" stroke-width="1"/><path d="M133.5 88 L218.5 71.5 L229.6 93.8 L249 64.6 L305 79.2 L407.5 65.6 L458 75 L506.8 60.2 L518 74.4 L573 58.2 L620 78.3 L650 62 L702 105" fill="none" stroke="#f01010" stroke-width="1.400" stroke-linejoin="round"/><path d="M620 78.300L702 105" stroke="#e01010" stroke-width="0.700" stroke-dasharray="1 2"/><path d="M702 105L728 95.500" stroke="#f01010" stroke-width="0.900" stroke-dasharray="1.200 1.200"/><rect x="316" y="95" width="233.500" height="11.200" fill="none" stroke="#f06a6a" stroke-width="0.500"/><path d="M726.800 54.500h3.400l-1.700 2z" fill="#9aa"/><circle cx="994.600" cy="59.400" r="2.900" fill="none" stroke="#ddd" stroke-width="0.800"/><path d="M993.200 60.300q1.400 1.300 2.800 0" stroke="#ddd" stroke-width="0.600" fill="none"/><path d="M993.600 58.500v0.800M995.600 58.500v0.800" stroke="#ddd" stroke-width="0.600"/><path d="M132.8 108.400v2.400" stroke="#f0f0f0" stroke-width="0.800"/><path d="M167.0 108.400v2.400" stroke="#f0f0f0" stroke-width="0.800"/><path d="M201.1 108.400v2.400" stroke="#f0f0f0" stroke-width="0.800"/><path d="M235.2 108.400v2.400" stroke="#f0f0f0" stroke-width="0.800"/><path d="M269.4 108.400v2.400" stroke="#f0f0f0" stroke-width="0.800"/><path d="M303.6 108.400v2.400" stroke="#f0f0f0" stroke-width="0.800"/><path d="M337.7 108.400v2.400" stroke="#f0f0f0" stroke-width="0.800"/><path d="M371.9 108.400v2.400" stroke="#f0f0f0" stroke-width="0.800"/><path d="M406.0 108.400v2.400" stroke="#f0f0f0" stroke-width="0.800"/><path d="M440.1 108.400v2.400" stroke="#f0f0f0" stroke-width="0.800"/><path d="M474.3 108.400v2.400" stroke="#f0f0f0" stroke-width="0.800"/><path d="M508.4 108.400v2.400" stroke="#f0f0f0" stroke-width="0.800"/><path d="M542.6 108.400v2.400" stroke="#f0f0f0" stroke-width="0.800"/><path d="M576.8 108.400v2.400" stroke="#f0f0f0" stroke-width="0.800"/><path d="M610.9 108.400v2.400" stroke="#f0f0f0" stroke-width="0.800"/><path d="M645.0 108.400v2.400" stroke="#f0f0f0" stroke-width="0.800"/><path d="M679.2 108.400v2.400" stroke="#f0f0f0" stroke-width="0.800"/><path d="M713.3 108.400v2.400" stroke="#f0f0f0" stroke-width="0.800"/><path d="M1000.600 71.9h1.800" stroke="#e8e8e8" stroke-width="0.700"/><path d="M1000.600 89h1.800" stroke="#e8e8e8" stroke-width="0.700"/><path d="M1000.600 106.9h1.800" stroke="#e8e8e8" stroke-width="0.700"/></svg>
<span style="left:134.30px;top:54.50px;font-size:4.2px;line-height:8px;color:#f2f2f2;">▼</span>
<span style="left:141.30px;top:54.50px;font-size:4.7px;line-height:8px;color:#f2f2f2;letter-spacing:0.120px;">EURJPY,M5  126.767 126.771 126.767 126.769</span>
<span style="left:135.50px;top:68.00px;font-size:4.6px;line-height:8px;color:#f2f2f2;letter-spacing:0.088px;">Non-trading Hours</span>
<span style="left:135.50px;top:74.50px;font-size:4.6px;line-height:8px;color:#f2f2f2;letter-spacing:0.099px;">Slowing_MBB:</span>
<span style="left:316.20px;top:94.40px;font-size:11px;line-height:13px;color:#fff;letter-spacing:0.033px;">Information my Email :  eatradefx@hotmail.com</span>
<span style="left:133.30px;top:109.50px;font-size:5.0px;line-height:8px;color:#f2f2f2;letter-spacing:-0.089px;">5 Feb 2021</span>
<span style="left:167.45px;top:109.50px;font-size:5.0px;line-height:8px;color:#f2f2f2;letter-spacing:-0.069px;">5 Feb 21:50</span>
<span style="left:201.60px;top:109.50px;font-size:5.0px;line-height:8px;color:#f2f2f2;letter-spacing:-0.069px;">5 Feb 23:10</span>
<span style="left:235.75px;top:109.50px;font-size:5.0px;line-height:8px;color:#f2f2f2;letter-spacing:-0.069px;">8 Feb 00:30</span>
<span style="left:269.90px;top:109.50px;font-size:5.0px;line-height:8px;color:#f2f2f2;letter-spacing:-0.069px;">8 Feb 01:50</span>
<span style="left:304.05px;top:109.50px;font-size:5.0px;line-height:8px;color:#f2f2f2;letter-spacing:-0.069px;">8 Feb 03:10</span>
<span style="left:338.20px;top:109.50px;font-size:5.0px;line-height:8px;color:#f2f2f2;letter-spacing:-0.069px;">8 Feb 04:30</span>
<span style="left:372.35px;top:109.50px;font-size:5.0px;line-height:8px;color:#f2f2f2;letter-spacing:-0.069px;">8 Feb 05:50</span>
<span style="left:406.50px;top:109.50px;font-size:5.0px;line-height:8px;color:#f2f2f2;letter-spacing:-0.069px;">8 Feb 07:10</span>
<span style="left:440.65px;top:109.50px;font-size:5.0px;line-height:8px;color:#f2f2f2;letter-spacing:-0.069px;">8 Feb 08:30</span>
<span style="left:474.80px;top:109.50px;font-size:5.0px;line-height:8px;color:#f2f2f2;letter-spacing:-0.069px;">8 Feb 09:50</span>
<span style="left:508.95px;top:109.50px;font-size:5.0px;line-height:8px;color:#f2f2f2;letter-spacing:-0.032px;">8 Feb 11:10</span>
<span style="left:543.10px;top:109.50px;font-size:5.0px;line-height:8px;color:#f2f2f2;letter-spacing:-0.069px;">8 Feb 12:30</span>
<span style="left:577.25px;top:109.50px;font-size:5.0px;line-height:8px;color:#f2f2f2;letter-spacing:-0.069px;">8 Feb 13:50</span>
<span style="left:611.40px;top:109.50px;font-size:5.0px;line-height:8px;color:#f2f2f2;letter-spacing:-0.069px;">8 Feb 15:10</span>
<span style="left:645.55px;top:109.50px;font-size:5.0px;line-height:8px;color:#f2f2f2;letter-spacing:-0.069px;">8 Feb 16:30</span>
<span style="left:679.70px;top:109.50px;font-size:5.0px;line-height:8px;color:#f2f2f2;letter-spacing:-0.069px;">8 Feb 17:50</span>
<span style="left:713.85px;top:109.50px;font-size:5.0px;line-height:8px;color:#f2f2f2;letter-spacing:-0.069px;">8 Feb 19:10</span>
<span style="left:1003.75px;top:68.40px;font-size:4.8px;line-height:8px;color:#f2f2f2;letter-spacing:-0.009px;">126.985</span>
<span style="left:1003.75px;top:85.50px;font-size:4.8px;line-height:8px;color:#f2f2f2;letter-spacing:-0.009px;">126.815</span>
<span style="left:1003.75px;top:103.40px;font-size:4.8px;line-height:8px;color:#f2f2f2;letter-spacing:-0.009px;">126.645</span>
<div style="position:absolute;left:1001.00px;top:91.25px;width:22.00px;height:5.70px;background:#fff;"></div>
<span style="left:1003.75px;top:90.50px;font-size:4.8px;line-height:8px;color:#000;letter-spacing:-0.009px;">126.769</span>
<span style="right:41.09px;top:55.50px;font-size:4.8px;line-height:8px;color:#f2f2f2;letter-spacing:0.005px;">Robot FX Aries Scalper</span>
<div style="position:absolute;left:970px;top:54.700px;width:31px;height:60px;overflow:hidden">
<span style="right:1.5px;top:-2.60px;font-size:5.6px;line-height:8px;color:#c8c018;letter-spacing:-0.15px">100.0%</span>
<span style="right:1.5px;top:13.05px;font-size:5.6px;line-height:8px;color:#c8c018;letter-spacing:-0.15px">61.8%</span>
<span style="right:1.5px;top:18.05px;font-size:5.6px;line-height:8px;color:#c8c018;letter-spacing:-0.15px">50.0%</span>
<span style="right:1.5px;top:23.05px;font-size:5.6px;line-height:8px;color:#c8c018;letter-spacing:-0.15px">38.2%</span>
<span style="right:1.5px;top:29.30px;font-size:5.6px;line-height:8px;color:#c8c018;letter-spacing:-0.15px">23.6%</span>
<span style="right:1.5px;top:39.90px;font-size:5.6px;line-height:8px;color:#c8c018;letter-spacing:-0.15px">0.0.0%</span>
</div>
<span style="left:694.00px;top:56.25px;font-size:5.4px;line-height:8px;color:#18a048;letter-spacing:0.096px;">50%</span>
<span style="left:693.00px;top:73.10px;font-size:5.4px;line-height:8px;color:#18a048;letter-spacing:0.596px;">25%</span>
<span style="left:735.00px;top:86.25px;font-size:6.2px;line-height:8px;color:#1a68b8;letter-spacing:0.686px;">Sell TARGET</span>
<span style="left:735.00px;top:90.25px;font-size:5.6px;line-height:8px;color:#2a7a6a;letter-spacing:0.386px;">126.725.803</span>
<span style="left:735.00px;top:95.00px;font-size:6.2px;line-height:8px;color:#c08410;letter-spacing:0.353px;">Short TARGET</span>
<span style="left:733.00px;top:102.75px;font-size:5.4px;line-height:8px;color:#8a8a8a;letter-spacing:-0.010px;">PIVOT 126.681</span>
<div style="position:absolute;left:131.00px;top:119.50px;width:897.00px;height:11.00px;background:#f0f0f0;"></div>
<div style="position:absolute;left:131.00px;top:119.50px;width:897.00px;height:0.60px;background:#8a8a8a;"></div>
<span style="left:139.70px;top:121.80px;font-size:5.9px;line-height:8px;color:#7c7c7c;letter-spacing:-0.057px;">GBPUSD,M5</span>
<span style="left:186.00px;top:121.80px;font-size:5.9px;line-height:8px;color:#7c7c7c;letter-spacing:-0.062px;">EURGBP,M5</span>
<span style="left:231.00px;top:121.80px;font-size:5.9px;line-height:8px;color:#7c7c7c;letter-spacing:0.073px;">NZDUSD,M5</span>
<span style="left:277.50px;top:121.80px;font-size:5.9px;line-height:8px;color:#7c7c7c;letter-spacing:-0.156px;">EURUSD,M5</span>
<span style="left:323.00px;top:121.80px;font-size:5.9px;line-height:8px;color:#7c7c7c;letter-spacing:0.018px;">USDJPY,M5</span>
<div style="position:absolute;left:180.50px;top:121.50px;width:0.70px;height:7.00px;background:#999;"></div>
<div style="position:absolute;left:226.00px;top:121.50px;width:0.70px;height:7.00px;background:#999;"></div>
<div style="position:absolute;left:272.50px;top:121.50px;width:0.70px;height:7.00px;background:#999;"></div>
<div style="position:absolute;left:317.50px;top:121.50px;width:0.70px;height:7.00px;background:#999;"></div>
<div style="position:absolute;left:362.30px;top:119.30px;width:41.50px;height:10.60px;background:#fff;box-shadow:0 0 0 0.700px #222;clip-path:inset(0.3px -2px -2px -2px);"></div>
<span style="left:367.00px;top:121.80px;font-size:5.9px;line-height:8px;color:#15202c;letter-spacing:-0.044px;">EURJPY,M5</span>
<svg style="left:1009px;top:123.5px" width="11.5" height="3" viewBox="0 0 23.0 6.0"><path d="M3.500 0.500l-2.500 2.500 2.500 2.500M19.500 0.500l2.500 2.500-2.500 2.500" fill="none" stroke="#8c8c8c" stroke-width="1.400"/></svg>
<div style="position:absolute;left:0.00px;top:130.50px;width:1028.00px;height:3.00px;background:#f0f0f0;"></div>
<div style="position:absolute;left:0.00px;top:131.20px;width:1028.00px;height:0.60px;background:#dcdcdc;"></div>
<div style="position:absolute;left:0.00px;top:133.50px;width:10.30px;height:408.00px;background:#f0f0f0;"></div>
<div style="position:absolute;left:2.50px;top:141.00px;width:7.10px;height:400.00px;background:#b3cdea;"></div>
<div style="position:absolute;left:9.60px;top:133.50px;width:0.70px;height:395.00px;background:#a4a4a4;"></div>
<div style="position:absolute;left:2.50px;top:516.50px;width:6.80px;height:23.50px;background:#8fb0da;"></div>
<svg style="left:3.8px;top:134.8px" width="3.6" height="3.6" viewBox="0 0 7.2 7.2"><path d="M0.800 0.800l5.600 5.600M6.400 0.800l-5.600 5.600" stroke="#111" stroke-width="1.600"/></svg>
<span style="left:-9.3px;top:525px;width:30px;text-align:center;font-size:4.6px;line-height:6px;color:#101c30;font-weight:bold;transform:rotate(-90deg);letter-spacing:0.1px">Terminal</span>
<div style="position:absolute;left:10.30px;top:133.50px;width:1017.70px;height:395.00px;background:#fff;"></div>
<div style="position:absolute;left:556.70px;top:146.30px;width:62.20px;height:10.67px;background:#5fec5f;"></div>
<div style="position:absolute;left:10.30px;top:156.97px;width:1004.70px;height:10.67px;background:#ececec;"></div>
<div style="position:absolute;left:556.70px;top:156.97px;width:62.20px;height:10.67px;background:#5fec5f;"></div>
<div style="position:absolute;left:556.70px;top:167.63px;width:62.20px;height:10.67px;background:#5fec5f;"></div>
<div style="position:absolute;left:10.30px;top:178.30px;width:1004.70px;height:10.67px;background:#ececec;"></div>
<div style="position:absolute;left:556.70px;top:178.30px;width:62.20px;height:10.67px;background:#5fec5f;"></div>
<div style="position:absolute;left:556.70px;top:188.97px;width:62.20px;height:10.67px;background:#5fec5f;"></div>
<div style="position:absolute;left:10.30px;top:199.64px;width:1004.70px;height:10.67px;background:#ececec;"></div>
<div style="position:absolute;left:556.70px;top:210.30px;width:62.20px;height:10.67px;background:#5fec5f;"></div>
<div style="position:absolute;left:10.30px;top:220.97px;width:1004.70px;height:10.67px;background:#ececec;"></div>
<div style="position:absolute;left:556.70px;top:220.97px;width:62.20px;height:10.67px;background:#5fec5f;"></div>
<div style="position:absolute;left:556.70px;top:231.64px;width:62.20px;height:10.67px;background:#5fec5f;"></div>
<div style="position:absolute;left:10.30px;top:242.30px;width:1004.70px;height:10.67px;background:#ececec;"></div>
<div style="position:absolute;left:556.70px;top:242.30px;width:62.20px;height:10.67px;background:#5fec5f;"></div>
<div style="position:absolute;left:556.70px;top:252.97px;width:62.20px;height:10.67px;background:#5fec5f;"></div>
<div style="position:absolute;left:10.30px;top:263.64px;width:1004.70px;height:10.67px;background:#ececec;"></div>
<div style="position:absolute;left:556.70px;top:263.64px;width:62.20px;height:10.67px;background:#5fec5f;"></div>
<div style="position:absolute;left:556.70px;top:274.30px;width:62.20px;height:10.67px;background:#5fec5f;"></div>
<div style="position:absolute;left:10.30px;top:284.97px;width:1004.70px;height:10.67px;background:#ececec;"></div>
<div style="position:absolute;left:556.70px;top:284.97px;width:62.20px;height:10.67px;background:#5fec5f;"></div>
<div style="position:absolute;left:556.70px;top:295.64px;width:62.20px;height:10.67px;background:#5fec5f;"></div>
<div style="position:absolute;left:10.30px;top:306.31px;width:1004.70px;height:10.67px;background:#ececec;"></div>
<div style="position:absolute;left:556.70px;top:306.31px;width:62.20px;height:10.67px;background:#5fec5f;"></div>
<div style="position:absolute;left:556.70px;top:316.97px;width:62.20px;height:10.67px;background:#5fec5f;"></div>
<div style="position:absolute;left:10.30px;top:327.64px;width:1004.70px;height:10.67px;background:#ececec;"></div>
<div style="position:absolute;left:556.70px;top:327.64px;width:62.20px;height:10.67px;background:#5fec5f;"></div>
<div style="position:absolute;left:556.70px;top:338.31px;width:62.20px;height:10.67px;background:#5fec5f;"></div>
<div style="position:absolute;left:10.30px;top:348.97px;width:1004.70px;height:10.67px;background:#ececec;"></div>
<div style="position:absolute;left:556.70px;top:348.97px;width:62.20px;height:10.67px;background:#5fec5f;"></div>
<div style="position:absolute;left:556.70px;top:359.64px;width:62.20px;height:10.67px;background:#5fec5f;"></div>
<div style="position:absolute;left:10.30px;top:370.31px;width:1004.70px;height:10.67px;background:#ececec;"></div>
<div style="position:absolute;left:556.70px;top:370.31px;width:62.20px;height:10.67px;background:#5fec5f;"></div>
<div style="position:absolute;left:556.70px;top:380.97px;width:62.20px;height:10.67px;background:#5fec5f;"></div>
<div style="position:absolute;left:10.30px;top:391.64px;width:1004.70px;height:10.67px;background:#ececec;"></div>
<div style="position:absolute;left:556.70px;top:391.64px;width:62.20px;height:10.67px;background:#5fec5f;"></div>
<div style="position:absolute;left:556.70px;top:402.31px;width:62.20px;height:10.67px;background:#5fec5f;"></div>
<div style="position:absolute;left:10.30px;top:412.98px;width:1004.70px;height:10.67px;background:#0078d7;"></div>
<div style="position:absolute;left:556.70px;top:423.64px;width:62.20px;height:10.67px;background:#5fec5f;"></div>
<div style="position:absolute;left:10.30px;top:434.31px;width:1004.70px;height:10.67px;background:#ececec;"></div>
<div style="position:absolute;left:556.70px;top:434.31px;width:62.20px;height:10.67px;background:#5fec5f;"></div>
<div style="position:absolute;left:556.70px;top:444.98px;width:62.20px;height:10.67px;background:#5fec5f;"></div>
<div style="position:absolute;left:10.30px;top:455.64px;width:1004.70px;height:10.67px;background:#ececec;"></div>
<div style="position:absolute;left:556.70px;top:455.64px;width:62.20px;height:10.67px;background:#5fec5f;"></div>
<div style="position:absolute;left:556.70px;top:466.31px;width:62.20px;height:10.67px;background:#5fec5f;"></div>
<div style="position:absolute;left:10.30px;top:476.98px;width:1004.70px;height:10.67px;background:#ececec;"></div>
<div style="position:absolute;left:556.70px;top:476.98px;width:62.20px;height:10.67px;background:#5fec5f;"></div>
<div style="position:absolute;left:556.70px;top:487.64px;width:62.20px;height:10.67px;background:#5fec5f;"></div>
<div style="position:absolute;left:10.30px;top:498.31px;width:1004.70px;height:10.67px;background:#ececec;"></div>
<div style="position:absolute;left:556.70px;top:498.31px;width:62.20px;height:10.67px;background:#5fec5f;"></div>
<div style="position:absolute;left:556.70px;top:508.98px;width:62.20px;height:10.67px;background:#5fec5f;"></div>
<div style="position:absolute;left:10.30px;top:519.64px;width:1004.70px;height:8.75px;background:#ececec;"></div>
<div style="position:absolute;left:556.70px;top:519.64px;width:62.20px;height:8.75px;background:#5fec5f;"></div>
<div style="position:absolute;left:92.50px;top:146.00px;width:0.70px;height:382.50px;background:#f3f3f3;"></div>
<div style="position:absolute;left:234.90px;top:146.00px;width:0.70px;height:382.50px;background:#f3f3f3;"></div>
<div style="position:absolute;left:298.40px;top:146.00px;width:0.70px;height:382.50px;background:#f3f3f3;"></div>
<div style="position:absolute;left:359.40px;top:146.00px;width:0.70px;height:382.50px;background:#f3f3f3;"></div>
<div style="position:absolute;left:423.40px;top:146.00px;width:0.70px;height:382.50px;background:#f3f3f3;"></div>
<div style="position:absolute;left:492.30px;top:146.00px;width:0.70px;height:382.50px;background:#f3f3f3;"></div>
<div style="position:absolute;left:556.50px;top:146.00px;width:0.70px;height:382.50px;background:#f3f3f3;"></div>
<div style="position:absolute;left:619.80px;top:146.00px;width:0.70px;height:382.50px;background:#f3f3f3;"></div>
<div style="position:absolute;left:761.40px;top:146.00px;width:0.70px;height:382.50px;background:#f3f3f3;"></div>
<div style="position:absolute;left:852.20px;top:146.00px;width:0.70px;height:382.50px;background:#f3f3f3;"></div>
<div style="position:absolute;left:915.90px;top:146.00px;width:0.70px;height:382.50px;background:#f3f3f3;"></div>
<div style="position:absolute;left:92.10px;top:146.00px;width:0.80px;height:382.50px;background:#dadada;"></div>
<div style="position:absolute;left:556.70px;top:156.67px;width:62.20px;height:0.60px;background:rgba(255,255,255,0.5);"></div>
<div style="position:absolute;left:556.70px;top:167.33px;width:62.20px;height:0.60px;background:rgba(255,255,255,0.5);"></div>
<div style="position:absolute;left:556.70px;top:178.00px;width:62.20px;height:0.60px;background:rgba(255,255,255,0.5);"></div>
<div style="position:absolute;left:556.70px;top:188.67px;width:62.20px;height:0.60px;background:rgba(255,255,255,0.5);"></div>
<div style="position:absolute;left:556.70px;top:199.34px;width:62.20px;height:0.60px;background:rgba(255,255,255,0.5);"></div>
<div style="position:absolute;left:556.70px;top:210.00px;width:62.20px;height:0.60px;background:rgba(255,255,255,0.5);"></div>
<div style="position:absolute;left:556.70px;top:220.67px;width:62.20px;height:0.60px;background:rgba(255,255,255,0.5);"></div>
<div style="position:absolute;left:556.70px;top:231.34px;width:62.20px;height:0.60px;background:rgba(255,255,255,0.5);"></div>
<div style="position:absolute;left:556.70px;top:242.00px;width:62.20px;height:0.60px;background:rgba(255,255,255,0.5);"></div>
<div style="position:absolute;left:556.70px;top:252.67px;width:62.20px;height:0.60px;background:rgba(255,255,255,0.5);"></div>
<div style="position:absolute;left:556.70px;top:263.34px;width:62.20px;height:0.60px;background:rgba(255,255,255,0.5);"></div>
<div style="position:absolute;left:556.70px;top:274.00px;width:62.20px;height:0.60px;background:rgba(255,255,255,0.5);"></div>
<div style="position:absolute;left:556.70px;top:284.67px;width:62.20px;height:0.60px;background:rgba(255,255,255,0.5);"></div>
<div style="position:absolute;left:556.70px;top:295.34px;width:62.20px;height:0.60px;background:rgba(255,255,255,0.5);"></div>
<div style="position:absolute;left:556.70px;top:306.00px;width:62.20px;height:0.60px;background:rgba(255,255,255,0.5);"></div>
<div style="position:absolute;left:556.70px;top:316.67px;width:62.20px;height:0.60px;background:rgba(255,255,255,0.5);"></div>
<div style="position:absolute;left:556.70px;top:327.34px;width:62.20px;height:0.60px;background:rgba(255,255,255,0.5);"></div>
<div style="position:absolute;left:556.70px;top:338.01px;width:62.20px;height:0.60px;background:rgba(255,255,255,0.5);"></div>
<div style="position:absolute;left:556.70px;top:348.67px;width:62.20px;height:0.60px;background:rgba(255,255,255,0.5);"></div>
<div style="position:absolute;left:556.70px;top:359.34px;width:62.20px;height:0.60px;background:rgba(255,255,255,0.5);"></div>
<div style="position:absolute;left:556.70px;top:370.01px;width:62.20px;height:0.60px;background:rgba(255,255,255,0.5);"></div>
<div style="position:absolute;left:556.70px;top:380.67px;width:62.20px;height:0.60px;background:rgba(255,255,255,0.5);"></div>
<div style="position:absolute;left:556.70px;top:391.34px;width:62.20px;height:0.60px;background:rgba(255,255,255,0.5);"></div>
<div style="position:absolute;left:556.70px;top:402.01px;width:62.20px;height:0.60px;background:rgba(255,255,255,0.5);"></div>
<div style="position:absolute;left:556.70px;top:434.01px;width:62.20px;height:0.60px;background:rgba(255,255,255,0.5);"></div>
<div style="position:absolute;left:556.70px;top:444.68px;width:62.20px;height:0.60px;background:rgba(255,255,255,0.5);"></div>
<div style="position:absolute;left:556.70px;top:455.34px;width:62.20px;height:0.60px;background:rgba(255,255,255,0.5);"></div>
<div style="position:absolute;left:556.70px;top:466.01px;width:62.20px;height:0.60px;background:rgba(255,255,255,0.5);"></div>
<div style="position:absolute;left:556.70px;top:476.68px;width:62.20px;height:0.60px;background:rgba(255,255,255,0.5);"></div>
<div style="position:absolute;left:556.70px;top:487.34px;width:62.20px;height:0.60px;background:rgba(255,255,255,0.5);"></div>
<div style="position:absolute;left:556.70px;top:498.01px;width:62.20px;height:0.60px;background:rgba(255,255,255,0.5);"></div>
<div style="position:absolute;left:556.70px;top:508.68px;width:62.20px;height:0.60px;background:rgba(255,255,255,0.5);"></div>
<div style="position:absolute;left:556.70px;top:519.35px;width:62.20px;height:0.60px;background:rgba(255,255,255,0.5);"></div>
<div style="position:absolute;left:556.70px;top:530.01px;width:62.20px;height:0.60px;background:rgba(255,255,255,0.5);"></div>
<div style="position:absolute;left:0;top:0;width:1028px;height:528.4px;overflow:hidden">
<svg style="left:12px;top:148.0px" width="7.3" height="8" viewBox="0 0 14.6 16.0"><path d="M1 0.800h7.500l3.300 3.300v10.300h-10.800z" fill="#fff" stroke="#666" stroke-width="1.200"/><path d="M8.500 0.800v3.300h3.300" fill="none" stroke="#666" stroke-width="0.900"/><circle cx="11.400" cy="12" r="3.500" fill="#e8491d" stroke="#b83a14" stroke-width="0.600"/></svg>
<span style="left:22.00px;top:148.83px;font-size:5.8px;line-height:8px;color:#0c0c0c;transform:scaleY(1.1);letter-spacing:-0.004px;">247358519</span>
<span style="right:795.00px;top:148.83px;font-size:5.72px;line-height:8px;color:#0c0c0c;transform:scaleY(1.1);">2020.12.02 05:52:25</span>
<span style="right:731.00px;top:148.83px;font-size:6.35px;line-height:8px;color:#0c0c0c;">sell</span>
<span style="right:670.50px;top:148.83px;font-size:5.72px;line-height:8px;color:#0c0c0c;transform:scaleY(1.1);">2.80</span>
<span style="right:606.50px;top:148.83px;font-size:6.35px;line-height:8px;color:#0c0c0c;">gbpusd</span>
<span style="right:537.40px;top:148.83px;font-size:5.72px;line-height:8px;color:#0c0c0c;transform:scaleY(1.1);">1.34248</span>
<span style="right:473.40px;top:148.83px;font-size:5.72px;line-height:8px;color:#0c0c0c;transform:scaleY(1.1);">1.37748</span>
<span style="right:409.60px;top:148.83px;font-size:5.72px;line-height:8px;color:#0c0c0c;transform:scaleY(1.1);">1.34048</span>
<span style="right:268.50px;top:148.83px;font-size:5.72px;line-height:8px;color:#0c0c0c;transform:scaleY(1.1);">2020.12.02 09:58:42</span>
<span style="right:177.20px;top:148.83px;font-size:5.72px;line-height:8px;color:#0c0c0c;transform:scaleY(1.1);">1.34048</span>
<span style="right:113.50px;top:148.83px;font-size:5.72px;line-height:8px;color:#0c0c0c;transform:scaleY(1.1);">0.00</span>
<span style="right:14.70px;top:148.83px;font-size:5.72px;line-height:8px;color:#0c0c0c;transform:scaleY(1.1);">560.00</span>
<svg style="left:12px;top:158.667px" width="7.3" height="8" viewBox="0 0 14.6 16.0"><path d="M1 0.800h7.500l3.300 3.300v10.300h-10.800z" fill="#fff" stroke="#666" stroke-width="1.200"/><path d="M8.500 0.800v3.300h3.300" fill="none" stroke="#666" stroke-width="0.900"/><circle cx="11.400" cy="12" r="3.500" fill="#e8491d" stroke="#b83a14" stroke-width="0.600"/></svg>
<span style="left:22.00px;top:159.50px;font-size:5.8px;line-height:8px;color:#0c0c0c;transform:scaleY(1.1);letter-spacing:-0.004px;">247380292</span>
<span style="right:795.00px;top:159.50px;font-size:5.72px;line-height:8px;color:#0c0c0c;transform:scaleY(1.1);">2020.12.02 08:51:12</span>
<span style="right:731.00px;top:159.50px;font-size:6.35px;line-height:8px;color:#0c0c0c;">sell</span>
<span style="right:670.50px;top:159.50px;font-size:5.72px;line-height:8px;color:#0c0c0c;transform:scaleY(1.1);">0.30</span>
<span style="right:606.50px;top:159.50px;font-size:6.35px;line-height:8px;color:#0c0c0c;">usdjpy</span>
<span style="right:537.40px;top:159.50px;font-size:5.72px;line-height:8px;color:#0c0c0c;transform:scaleY(1.1);">104.470</span>
<span style="right:473.40px;top:159.50px;font-size:5.72px;line-height:8px;color:#0c0c0c;transform:scaleY(1.1);">108.470</span>
<span style="right:409.60px;top:159.50px;font-size:5.72px;line-height:8px;color:#0c0c0c;transform:scaleY(1.1);">104.270</span>
<span style="right:268.50px;top:159.50px;font-size:5.72px;line-height:8px;color:#0c0c0c;transform:scaleY(1.1);">2020.12.03 10:13:23</span>
<span style="right:177.20px;top:159.50px;font-size:5.72px;line-height:8px;color:#0c0c0c;transform:scaleY(1.1);">104.270</span>
<span style="right:113.50px;top:159.50px;font-size:5.72px;line-height:8px;color:#0c0c0c;transform:scaleY(1.1);">0.00</span>
<span style="right:14.70px;top:159.50px;font-size:5.72px;line-height:8px;color:#0c0c0c;transform:scaleY(1.1);">57.54</span>
<svg style="left:12px;top:169.334px" width="7.3" height="8" viewBox="0 0 14.6 16.0"><path d="M1 0.800h7.500l3.300 3.300v10.300h-10.800z" fill="#fff" stroke="#666" stroke-width="1.200"/><path d="M8.500 0.800v3.300h3.300" fill="none" stroke="#666" stroke-width="0.900"/><circle cx="11.400" cy="12" r="3.500" fill="#e8491d" stroke="#b83a14" stroke-width="0.600"/></svg>
<span style="left:22.00px;top:170.17px;font-size:5.8px;line-height:8px;color:#0c0c0c;transform:scaleY(1.1);letter-spacing:-0.004px;">247385402</span>
<span style="right:795.00px;top:170.17px;font-size:5.72px;line-height:8px;color:#0c0c0c;transform:scaleY(1.1);">2020.12.02 09:14:21</span>
<span style="right:731.00px;top:170.17px;font-size:6.35px;line-height:8px;color:#0c0c0c;">sell</span>
<span style="right:670.50px;top:170.17px;font-size:5.72px;line-height:8px;color:#0c0c0c;transform:scaleY(1.1);">0.30</span>
<span style="right:606.50px;top:170.17px;font-size:6.35px;line-height:8px;color:#0c0c0c;">usdjpy</span>
<span style="right:537.40px;top:170.17px;font-size:5.72px;line-height:8px;color:#0c0c0c;transform:scaleY(1.1);">104.501</span>
<span style="right:473.40px;top:170.17px;font-size:5.72px;line-height:8px;color:#0c0c0c;transform:scaleY(1.1);">108.501</span>
<span style="right:409.60px;top:170.17px;font-size:5.72px;line-height:8px;color:#0c0c0c;transform:scaleY(1.1);">104.301</span>
<span style="right:268.50px;top:170.17px;font-size:5.72px;line-height:8px;color:#0c0c0c;transform:scaleY(1.1);">2020.12.03 09:57:16</span>
<span style="right:177.20px;top:170.17px;font-size:5.72px;line-height:8px;color:#0c0c0c;transform:scaleY(1.1);">104.301</span>
<span style="right:113.50px;top:170.17px;font-size:5.72px;line-height:8px;color:#0c0c0c;transform:scaleY(1.1);">0.00</span>
<span style="right:14.70px;top:170.17px;font-size:5.72px;line-height:8px;color:#0c0c0c;transform:scaleY(1.1);">57.53</span>
<svg style="left:12px;top:180.001px" width="7.3" height="8" viewBox="0 0 14.6 16.0"><path d="M1 0.800h7.500l3.300 3.300v10.300h-10.800z" fill="#fff" stroke="#666" stroke-width="1.200"/><path d="M8.500 0.800v3.300h3.300" fill="none" stroke="#666" stroke-width="0.900"/><circle cx="11.400" cy="12" r="3.500" fill="#e8491d" stroke="#b83a14" stroke-width="0.600"/></svg>
<span style="left:22.00px;top:180.83px;font-size:5.8px;line-height:8px;color:#0c0c0c;transform:scaleY(1.1);letter-spacing:-0.004px;">247387649</span>
<span style="right:795.00px;top:180.83px;font-size:5.72px;line-height:8px;color:#0c0c0c;transform:scaleY(1.1);">2020.12.02 09:25:11</span>
<span style="right:731.00px;top:180.83px;font-size:6.35px;line-height:8px;color:#0c0c0c;">sell</span>
<span style="right:670.50px;top:180.83px;font-size:5.72px;line-height:8px;color:#0c0c0c;transform:scaleY(1.1);">1.05</span>
<span style="right:606.50px;top:180.83px;font-size:6.35px;line-height:8px;color:#0c0c0c;">nzdusd</span>
<span style="right:537.40px;top:180.83px;font-size:5.72px;line-height:8px;color:#0c0c0c;transform:scaleY(1.1);">0.70735</span>
<span style="right:473.40px;top:180.83px;font-size:5.72px;line-height:8px;color:#0c0c0c;transform:scaleY(1.1);">0.74735</span>
<span style="right:409.60px;top:180.83px;font-size:5.72px;line-height:8px;color:#0c0c0c;transform:scaleY(1.1);">0.70535</span>
<span style="right:268.50px;top:180.83px;font-size:5.72px;line-height:8px;color:#0c0c0c;transform:scaleY(1.1);">2020.12.02 13:37:28</span>
<span style="right:177.20px;top:180.83px;font-size:5.72px;line-height:8px;color:#0c0c0c;transform:scaleY(1.1);">0.70535</span>
<span style="right:113.50px;top:180.83px;font-size:5.72px;line-height:8px;color:#0c0c0c;transform:scaleY(1.1);">0.00</span>
<span style="right:14.70px;top:180.83px;font-size:5.72px;line-height:8px;color:#0c0c0c;transform:scaleY(1.1);">210.00</span>
<svg style="left:12px;top:190.668px" width="7.3" height="8" viewBox="0 0 14.6 16.0"><path d="M1 0.800h7.500l3.300 3.300v10.300h-10.800z" fill="#fff" stroke="#666" stroke-width="1.200"/><path d="M8.500 0.800v3.300h3.300" fill="none" stroke="#666" stroke-width="0.900"/><circle cx="11.400" cy="12" r="3.500" fill="#e8491d" stroke="#b83a14" stroke-width="0.600"/></svg>
<span style="left:22.00px;top:191.50px;font-size:5.8px;line-height:8px;color:#0c0c0c;transform:scaleY(1.1);letter-spacing:-0.004px;">247389181</span>
<span style="right:795.00px;top:191.50px;font-size:5.72px;line-height:8px;color:#0c0c0c;transform:scaleY(1.1);">2020.12.02 09:32:31</span>
<span style="right:731.00px;top:191.50px;font-size:6.35px;line-height:8px;color:#0c0c0c;">sell</span>
<span style="right:670.50px;top:191.50px;font-size:5.72px;line-height:8px;color:#0c0c0c;transform:scaleY(1.1);">2.80</span>
<span style="right:606.50px;top:191.50px;font-size:6.35px;line-height:8px;color:#0c0c0c;">gbpusd</span>
<span style="right:537.40px;top:191.50px;font-size:5.72px;line-height:8px;color:#0c0c0c;transform:scaleY(1.1);">1.34280</span>
<span style="right:473.40px;top:191.50px;font-size:5.72px;line-height:8px;color:#0c0c0c;transform:scaleY(1.1);">1.37779</span>
<span style="right:409.60px;top:191.50px;font-size:5.72px;line-height:8px;color:#0c0c0c;transform:scaleY(1.1);">1.34079</span>
<span style="right:268.50px;top:191.50px;font-size:5.72px;line-height:8px;color:#0c0c0c;transform:scaleY(1.1);">2020.12.02 09:58:41</span>
<span style="right:177.20px;top:191.50px;font-size:5.72px;line-height:8px;color:#0c0c0c;transform:scaleY(1.1);">1.34079</span>
<span style="right:113.50px;top:191.50px;font-size:5.72px;line-height:8px;color:#0c0c0c;transform:scaleY(1.1);">0.00</span>
<span style="right:14.70px;top:191.50px;font-size:5.72px;line-height:8px;color:#0c0c0c;transform:scaleY(1.1);">562.80</span>
<svg style="left:12px;top:201.335px" width="7.3" height="8" viewBox="0 0 14.6 16.0"><path d="M1 0.800h7.500l3.300 3.300v10.300h-10.800z" fill="#fff" stroke="#666" stroke-width="1.200"/><path d="M8.500 0.800v3.300h3.300" fill="none" stroke="#666" stroke-width="0.900"/><circle cx="11.400" cy="12" r="3.500" fill="#e8491d" stroke="#b83a14" stroke-width="0.600"/></svg>
<span style="left:22.00px;top:202.17px;font-size:5.8px;line-height:8px;color:#0c0c0c;transform:scaleY(1.1);letter-spacing:-0.004px;">247396007</span>
<span style="right:795.00px;top:202.17px;font-size:5.72px;line-height:8px;color:#0c0c0c;transform:scaleY(1.1);">2020.12.02 09:58:46</span>
<span style="left:279.60px;top:202.17px;font-size:6.2px;line-height:8px;color:#0c0c0c;letter-spacing:-0.036px;">balance</span>
<span style="right:113.50px;top:202.17px;font-size:6.35px;line-height:8px;color:#0c0c0c;">Withdrawal to bank account</span>
<span style="right:14.70px;top:202.17px;font-size:5.72px;line-height:8px;color:#0c0c0c;transform:scaleY(1.1);">-3 487.20</span>
<svg style="left:12px;top:212.002px" width="7.3" height="8" viewBox="0 0 14.6 16.0"><path d="M1 0.800h7.500l3.300 3.300v10.300h-10.800z" fill="#fff" stroke="#666" stroke-width="1.200"/><path d="M8.500 0.800v3.300h3.300" fill="none" stroke="#666" stroke-width="0.900"/><circle cx="11.400" cy="12" r="3.500" fill="#e8491d" stroke="#b83a14" stroke-width="0.600"/></svg>
<span style="left:22.00px;top:212.84px;font-size:5.8px;line-height:8px;color:#0c0c0c;transform:scaleY(1.1);letter-spacing:-0.004px;">247396671</span>
<span style="right:795.00px;top:212.84px;font-size:5.72px;line-height:8px;color:#0c0c0c;transform:scaleY(1.1);">2020.12.02 09:59:12</span>
<span style="right:731.00px;top:212.84px;font-size:6.35px;line-height:8px;color:#0c0c0c;">sell</span>
<span style="right:670.50px;top:212.84px;font-size:5.72px;line-height:8px;color:#0c0c0c;transform:scaleY(1.1);">2.80</span>
<span style="right:606.50px;top:212.84px;font-size:6.35px;line-height:8px;color:#0c0c0c;">gbpusd</span>
<span style="right:537.40px;top:212.84px;font-size:5.72px;line-height:8px;color:#0c0c0c;transform:scaleY(1.1);">1.33655</span>
<span style="right:473.40px;top:212.84px;font-size:5.72px;line-height:8px;color:#0c0c0c;transform:scaleY(1.1);">1.37151</span>
<span style="right:409.60px;top:212.84px;font-size:5.72px;line-height:8px;color:#0c0c0c;transform:scaleY(1.1);">1.33451</span>
<span style="right:268.50px;top:212.84px;font-size:5.72px;line-height:8px;color:#0c0c0c;transform:scaleY(1.1);">2020.12.02 10:07:25</span>
<span style="right:177.20px;top:212.84px;font-size:5.72px;line-height:8px;color:#0c0c0c;transform:scaleY(1.1);">1.33451</span>
<span style="right:113.50px;top:212.84px;font-size:5.72px;line-height:8px;color:#0c0c0c;transform:scaleY(1.1);">0.00</span>
<span style="right:14.70px;top:212.84px;font-size:5.72px;line-height:8px;color:#0c0c0c;transform:scaleY(1.1);">571.20</span>
<svg style="left:12px;top:222.66899999999998px" width="7.3" height="8" viewBox="0 0 14.6 16.0"><path d="M1 0.800h7.500l3.300 3.300v10.300h-10.800z" fill="#fff" stroke="#666" stroke-width="1.200"/><path d="M8.500 0.800v3.300h3.300" fill="none" stroke="#666" stroke-width="0.900"/><circle cx="11.400" cy="12" r="3.500" fill="#e8491d" stroke="#b83a14" stroke-width="0.600"/></svg>
<span style="left:22.00px;top:223.50px;font-size:5.8px;line-height:8px;color:#0c0c0c;transform:scaleY(1.1);letter-spacing:-0.004px;">247397760</span>
<span style="right:795.00px;top:223.50px;font-size:5.72px;line-height:8px;color:#0c0c0c;transform:scaleY(1.1);">2020.12.02 10:00:00</span>
<span style="right:731.00px;top:223.50px;font-size:6.35px;line-height:8px;color:#0c0c0c;">sell</span>
<span style="right:670.50px;top:223.50px;font-size:5.72px;line-height:8px;color:#0c0c0c;transform:scaleY(1.1);">2.80</span>
<span style="right:606.50px;top:223.50px;font-size:6.35px;line-height:8px;color:#0c0c0c;">gbpusd</span>
<span style="right:537.40px;top:223.50px;font-size:5.72px;line-height:8px;color:#0c0c0c;transform:scaleY(1.1);">1.33790</span>
<span style="right:473.40px;top:223.50px;font-size:5.72px;line-height:8px;color:#0c0c0c;transform:scaleY(1.1);">1.37269</span>
<span style="right:409.60px;top:223.50px;font-size:5.72px;line-height:8px;color:#0c0c0c;transform:scaleY(1.1);">1.33569</span>
<span style="right:268.50px;top:223.50px;font-size:5.72px;line-height:8px;color:#0c0c0c;transform:scaleY(1.1);">2020.12.02 10:06:52</span>
<span style="right:177.20px;top:223.50px;font-size:5.72px;line-height:8px;color:#0c0c0c;transform:scaleY(1.1);">1.33569</span>
<span style="right:113.50px;top:223.50px;font-size:5.72px;line-height:8px;color:#0c0c0c;transform:scaleY(1.1);">0.00</span>
<span style="right:14.70px;top:223.50px;font-size:5.72px;line-height:8px;color:#0c0c0c;transform:scaleY(1.1);">618.80</span>
<svg style="left:12px;top:233.336px" width="7.3" height="8" viewBox="0 0 14.6 16.0"><path d="M1 0.800h7.500l3.300 3.300v10.300h-10.800z" fill="#fff" stroke="#666" stroke-width="1.200"/><path d="M8.500 0.800v3.300h3.300" fill="none" stroke="#666" stroke-width="0.900"/><circle cx="11.400" cy="12" r="3.500" fill="#e8491d" stroke="#b83a14" stroke-width="0.600"/></svg>
<span style="left:22.00px;top:234.17px;font-size:5.8px;line-height:8px;color:#0c0c0c;transform:scaleY(1.1);letter-spacing:-0.004px;">247397797</span>
<span style="right:795.00px;top:234.17px;font-size:5.72px;line-height:8px;color:#0c0c0c;transform:scaleY(1.1);">2020.12.02 10:00:00</span>
<span style="right:731.00px;top:234.17px;font-size:6.35px;line-height:8px;color:#0c0c0c;">sell</span>
<span style="right:670.50px;top:234.17px;font-size:5.72px;line-height:8px;color:#0c0c0c;transform:scaleY(1.1);">0.30</span>
<span style="right:606.50px;top:234.17px;font-size:6.35px;line-height:8px;color:#0c0c0c;">usdjpy</span>
<span style="right:537.40px;top:234.17px;font-size:5.72px;line-height:8px;color:#0c0c0c;transform:scaleY(1.1);">104.556</span>
<span style="right:473.40px;top:234.17px;font-size:5.72px;line-height:8px;color:#0c0c0c;transform:scaleY(1.1);">108.555</span>
<span style="right:409.60px;top:234.17px;font-size:5.72px;line-height:8px;color:#0c0c0c;transform:scaleY(1.1);">104.355</span>
<span style="right:268.50px;top:234.17px;font-size:5.72px;line-height:8px;color:#0c0c0c;transform:scaleY(1.1);">2020.12.03 09:49:09</span>
<span style="right:177.20px;top:234.17px;font-size:5.72px;line-height:8px;color:#0c0c0c;transform:scaleY(1.1);">104.355</span>
<span style="right:113.50px;top:234.17px;font-size:5.72px;line-height:8px;color:#0c0c0c;transform:scaleY(1.1);">0.00</span>
<span style="right:14.70px;top:234.17px;font-size:5.72px;line-height:8px;color:#0c0c0c;transform:scaleY(1.1);">57.78</span>
<svg style="left:12px;top:244.003px" width="7.3" height="8" viewBox="0 0 14.6 16.0"><path d="M1 0.800h7.500l3.300 3.300v10.300h-10.800z" fill="#fff" stroke="#666" stroke-width="1.200"/><path d="M8.500 0.800v3.300h3.300" fill="none" stroke="#666" stroke-width="0.900"/><circle cx="11.400" cy="12" r="3.500" fill="#2f8ee8" stroke="#1d66b8" stroke-width="0.600"/></svg>
<span style="left:22.00px;top:244.84px;font-size:5.8px;line-height:8px;color:#0c0c0c;transform:scaleY(1.1);letter-spacing:-0.004px;">247401251</span>
<span style="right:795.00px;top:244.84px;font-size:5.72px;line-height:8px;color:#0c0c0c;transform:scaleY(1.1);">2020.12.02 10:06:59</span>
<span style="right:731.00px;top:244.84px;font-size:6.35px;line-height:8px;color:#0c0c0c;">buy</span>
<span style="right:670.50px;top:244.84px;font-size:5.72px;line-height:8px;color:#0c0c0c;transform:scaleY(1.1);">0.30</span>
<span style="right:606.50px;top:244.84px;font-size:6.35px;line-height:8px;color:#0c0c0c;">eurusd</span>
<span style="right:537.40px;top:244.84px;font-size:5.72px;line-height:8px;color:#0c0c0c;transform:scaleY(1.1);">1.20656</span>
<span style="right:473.40px;top:244.84px;font-size:5.72px;line-height:8px;color:#0c0c0c;transform:scaleY(1.1);">1.16657</span>
<span style="right:409.60px;top:244.84px;font-size:5.72px;line-height:8px;color:#0c0c0c;transform:scaleY(1.1);">1.20857</span>
<span style="right:268.50px;top:244.84px;font-size:5.72px;line-height:8px;color:#0c0c0c;transform:scaleY(1.1);">2020.12.02 17:01:57</span>
<span style="right:177.20px;top:244.84px;font-size:5.72px;line-height:8px;color:#0c0c0c;transform:scaleY(1.1);">1.20857</span>
<span style="right:113.50px;top:244.84px;font-size:5.72px;line-height:8px;color:#0c0c0c;transform:scaleY(1.1);">0.00</span>
<span style="right:14.70px;top:244.84px;font-size:5.72px;line-height:8px;color:#0c0c0c;transform:scaleY(1.1);">60.30</span>
<svg style="left:12px;top:254.67000000000002px" width="7.3" height="8" viewBox="0 0 14.6 16.0"><path d="M1 0.800h7.500l3.300 3.300v10.300h-10.800z" fill="#fff" stroke="#666" stroke-width="1.200"/><path d="M8.500 0.800v3.300h3.300" fill="none" stroke="#666" stroke-width="0.900"/><circle cx="11.400" cy="12" r="3.500" fill="#e8491d" stroke="#b83a14" stroke-width="0.600"/></svg>
<span style="left:22.00px;top:255.50px;font-size:5.8px;line-height:8px;color:#0c0c0c;transform:scaleY(1.1);letter-spacing:-0.004px;">247403936</span>
<span style="right:795.00px;top:255.50px;font-size:5.72px;line-height:8px;color:#0c0c0c;transform:scaleY(1.1);">2020.12.02 10:13:50</span>
<span style="right:731.00px;top:255.50px;font-size:6.35px;line-height:8px;color:#0c0c0c;">sell</span>
<span style="right:670.50px;top:255.50px;font-size:5.72px;line-height:8px;color:#0c0c0c;transform:scaleY(1.1);">2.80</span>
<span style="right:606.50px;top:255.50px;font-size:6.35px;line-height:8px;color:#0c0c0c;">gbpusd</span>
<span style="right:537.40px;top:255.50px;font-size:5.72px;line-height:8px;color:#0c0c0c;transform:scaleY(1.1);">1.33643</span>
<span style="right:473.40px;top:255.50px;font-size:5.72px;line-height:8px;color:#0c0c0c;transform:scaleY(1.1);">1.37143</span>
<span style="right:409.60px;top:255.50px;font-size:5.72px;line-height:8px;color:#0c0c0c;transform:scaleY(1.1);">1.33443</span>
<span style="right:268.50px;top:255.50px;font-size:5.72px;line-height:8px;color:#0c0c0c;transform:scaleY(1.1);">2020.12.02 10:58:57</span>
<span style="right:177.20px;top:255.50px;font-size:5.72px;line-height:8px;color:#0c0c0c;transform:scaleY(1.1);">1.33443</span>
<span style="right:113.50px;top:255.50px;font-size:5.72px;line-height:8px;color:#0c0c0c;transform:scaleY(1.1);">0.00</span>
<span style="right:14.70px;top:255.50px;font-size:5.72px;line-height:8px;color:#0c0c0c;transform:scaleY(1.1);">560.00</span>
<svg style="left:12px;top:265.337px" width="7.3" height="8" viewBox="0 0 14.6 16.0"><path d="M1 0.800h7.500l3.300 3.300v10.300h-10.800z" fill="#fff" stroke="#666" stroke-width="1.200"/><path d="M8.500 0.800v3.300h3.300" fill="none" stroke="#666" stroke-width="0.900"/><circle cx="11.400" cy="12" r="3.500" fill="#2f8ee8" stroke="#1d66b8" stroke-width="0.600"/></svg>
<span style="left:22.00px;top:266.17px;font-size:5.8px;line-height:8px;color:#0c0c0c;transform:scaleY(1.1);letter-spacing:-0.004px;">247404469</span>
<span style="right:795.00px;top:266.17px;font-size:5.72px;line-height:8px;color:#0c0c0c;transform:scaleY(1.1);">2020.12.02 10:15:01</span>
<span style="right:731.00px;top:266.17px;font-size:6.35px;line-height:8px;color:#0c0c0c;">buy</span>
<span style="right:670.50px;top:266.17px;font-size:5.72px;line-height:8px;color:#0c0c0c;transform:scaleY(1.1);">0.30</span>
<span style="right:606.50px;top:266.17px;font-size:6.35px;line-height:8px;color:#0c0c0c;">eurusd</span>
<span style="right:537.40px;top:266.17px;font-size:5.72px;line-height:8px;color:#0c0c0c;transform:scaleY(1.1);">1.20614</span>
<span style="right:473.40px;top:266.17px;font-size:5.72px;line-height:8px;color:#0c0c0c;transform:scaleY(1.1);">1.16613</span>
<span style="right:409.60px;top:266.17px;font-size:5.72px;line-height:8px;color:#0c0c0c;transform:scaleY(1.1);">1.20813</span>
<span style="right:268.50px;top:266.17px;font-size:5.72px;line-height:8px;color:#0c0c0c;transform:scaleY(1.1);">2020.12.02 16:41:52</span>
<span style="right:177.20px;top:266.17px;font-size:5.72px;line-height:8px;color:#0c0c0c;transform:scaleY(1.1);">1.20813</span>
<span style="right:113.50px;top:266.17px;font-size:5.72px;line-height:8px;color:#0c0c0c;transform:scaleY(1.1);">0.00</span>
<span style="right:14.70px;top:266.17px;font-size:5.72px;line-height:8px;color:#0c0c0c;transform:scaleY(1.1);">59.70</span>
<svg style="left:12px;top:276.00399999999996px" width="7.3" height="8" viewBox="0 0 14.6 16.0"><path d="M1 0.800h7.500l3.300 3.300v10.300h-10.800z" fill="#fff" stroke="#666" stroke-width="1.200"/><path d="M8.500 0.800v3.300h3.300" fill="none" stroke="#666" stroke-width="0.900"/><circle cx="11.400" cy="12" r="3.500" fill="#2f8ee8" stroke="#1d66b8" stroke-width="0.600"/></svg>
<span style="left:22.00px;top:276.84px;font-size:5.8px;line-height:8px;color:#0c0c0c;transform:scaleY(1.1);letter-spacing:-0.004px;">247406125</span>
<span style="right:795.00px;top:276.84px;font-size:5.72px;line-height:8px;color:#0c0c0c;transform:scaleY(1.1);">2020.12.02 10:20:25</span>
<span style="right:731.00px;top:276.84px;font-size:6.35px;line-height:8px;color:#0c0c0c;">buy</span>
<span style="right:670.50px;top:276.84px;font-size:5.72px;line-height:8px;color:#0c0c0c;transform:scaleY(1.1);">0.30</span>
<span style="right:606.50px;top:276.84px;font-size:6.35px;line-height:8px;color:#0c0c0c;">eurgbp</span>
<span style="right:537.40px;top:276.84px;font-size:5.72px;line-height:8px;color:#0c0c0c;transform:scaleY(1.1);">0.90185</span>
<span style="right:473.40px;top:276.84px;font-size:5.72px;line-height:8px;color:#0c0c0c;transform:scaleY(1.1);">0.86188</span>
<span style="right:409.60px;top:276.84px;font-size:5.72px;line-height:8px;color:#0c0c0c;transform:scaleY(1.1);">0.90388</span>
<span style="right:268.50px;top:276.84px;font-size:5.72px;line-height:8px;color:#0c0c0c;transform:scaleY(1.1);">2020.12.02 14:08:28</span>
<span style="right:177.20px;top:276.84px;font-size:5.72px;line-height:8px;color:#0c0c0c;transform:scaleY(1.1);">0.90388</span>
<span style="right:113.50px;top:276.84px;font-size:5.72px;line-height:8px;color:#0c0c0c;transform:scaleY(1.1);">0.00</span>
<span style="right:14.70px;top:276.84px;font-size:5.72px;line-height:8px;color:#0c0c0c;transform:scaleY(1.1);">81.17</span>
<svg style="left:12px;top:286.671px" width="7.3" height="8" viewBox="0 0 14.6 16.0"><path d="M1 0.800h7.500l3.300 3.300v10.300h-10.800z" fill="#fff" stroke="#666" stroke-width="1.200"/><path d="M8.500 0.800v3.300h3.300" fill="none" stroke="#666" stroke-width="0.900"/><circle cx="11.400" cy="12" r="3.500" fill="#2f8ee8" stroke="#1d66b8" stroke-width="0.600"/></svg>
<span style="left:22.00px;top:287.50px;font-size:5.8px;line-height:8px;color:#0c0c0c;transform:scaleY(1.1);letter-spacing:-0.004px;">247409432</span>
<span style="right:795.00px;top:287.50px;font-size:5.72px;line-height:8px;color:#0c0c0c;transform:scaleY(1.1);">2020.12.02 10:30:01</span>
<span style="right:731.00px;top:287.50px;font-size:6.35px;line-height:8px;color:#0c0c0c;">buy</span>
<span style="right:670.50px;top:287.50px;font-size:5.72px;line-height:8px;color:#0c0c0c;transform:scaleY(1.1);">0.30</span>
<span style="right:606.50px;top:287.50px;font-size:6.35px;line-height:8px;color:#0c0c0c;">eurusd</span>
<span style="right:537.40px;top:287.50px;font-size:5.72px;line-height:8px;color:#0c0c0c;transform:scaleY(1.1);">1.20514</span>
<span style="right:473.40px;top:287.50px;font-size:5.72px;line-height:8px;color:#0c0c0c;transform:scaleY(1.1);">1.16514</span>
<span style="right:409.60px;top:287.50px;font-size:5.72px;line-height:8px;color:#0c0c0c;transform:scaleY(1.1);">1.20714</span>
<span style="right:268.50px;top:287.50px;font-size:5.72px;line-height:8px;color:#0c0c0c;transform:scaleY(1.1);">2020.12.02 15:35:36</span>
<span style="right:177.20px;top:287.50px;font-size:5.72px;line-height:8px;color:#0c0c0c;transform:scaleY(1.1);">1.20714</span>
<span style="right:113.50px;top:287.50px;font-size:5.72px;line-height:8px;color:#0c0c0c;transform:scaleY(1.1);">0.00</span>
<span style="right:14.70px;top:287.50px;font-size:5.72px;line-height:8px;color:#0c0c0c;transform:scaleY(1.1);">60.00</span>
<svg style="left:12px;top:297.338px" width="7.3" height="8" viewBox="0 0 14.6 16.0"><path d="M1 0.800h7.500l3.300 3.300v10.300h-10.800z" fill="#fff" stroke="#666" stroke-width="1.200"/><path d="M8.500 0.800v3.300h3.300" fill="none" stroke="#666" stroke-width="0.900"/><circle cx="11.400" cy="12" r="3.500" fill="#2f8ee8" stroke="#1d66b8" stroke-width="0.600"/></svg>
<span style="left:22.00px;top:298.17px;font-size:5.8px;line-height:8px;color:#0c0c0c;transform:scaleY(1.1);letter-spacing:-0.004px;">247418938</span>
<span style="right:795.00px;top:298.17px;font-size:5.72px;line-height:8px;color:#0c0c0c;transform:scaleY(1.1);">2020.12.02 10:59:19</span>
<span style="right:731.00px;top:298.17px;font-size:6.35px;line-height:8px;color:#0c0c0c;">buy</span>
<span style="right:670.50px;top:298.17px;font-size:5.72px;line-height:8px;color:#0c0c0c;transform:scaleY(1.1);">0.30</span>
<span style="right:606.50px;top:298.17px;font-size:6.35px;line-height:8px;color:#0c0c0c;">eurusd</span>
<span style="right:537.40px;top:298.17px;font-size:5.72px;line-height:8px;color:#0c0c0c;transform:scaleY(1.1);">1.20476</span>
<span style="right:473.40px;top:298.17px;font-size:5.72px;line-height:8px;color:#0c0c0c;transform:scaleY(1.1);">1.16474</span>
<span style="right:409.60px;top:298.17px;font-size:5.72px;line-height:8px;color:#0c0c0c;transform:scaleY(1.1);">1.20674</span>
<span style="right:268.50px;top:298.17px;font-size:5.72px;line-height:8px;color:#0c0c0c;transform:scaleY(1.1);">2020.12.02 15:11:50</span>
<span style="right:177.20px;top:298.17px;font-size:5.72px;line-height:8px;color:#0c0c0c;transform:scaleY(1.1);">1.20674</span>
<span style="right:113.50px;top:298.17px;font-size:5.72px;line-height:8px;color:#0c0c0c;transform:scaleY(1.1);">0.00</span>
<span style="right:14.70px;top:298.17px;font-size:5.72px;line-height:8px;color:#0c0c0c;transform:scaleY(1.1);">59.40</span>
<svg style="left:12px;top:308.005px" width="7.3" height="8" viewBox="0 0 14.6 16.0"><path d="M1 0.800h7.500l3.300 3.300v10.300h-10.800z" fill="#fff" stroke="#666" stroke-width="1.200"/><path d="M8.500 0.800v3.300h3.300" fill="none" stroke="#666" stroke-width="0.900"/><circle cx="11.400" cy="12" r="3.500" fill="#e8491d" stroke="#b83a14" stroke-width="0.600"/></svg>
<span style="left:22.00px;top:308.84px;font-size:5.8px;line-height:8px;color:#0c0c0c;transform:scaleY(1.1);letter-spacing:-0.004px;">247419330</span>
<span style="right:795.00px;top:308.84px;font-size:5.72px;line-height:8px;color:#0c0c0c;transform:scaleY(1.1);">2020.12.02 11:00:01</span>
<span style="right:731.00px;top:308.84px;font-size:6.35px;line-height:8px;color:#0c0c0c;">sell</span>
<span style="right:670.50px;top:308.84px;font-size:5.72px;line-height:8px;color:#0c0c0c;transform:scaleY(1.1);">0.30</span>
<span style="right:606.50px;top:308.84px;font-size:6.35px;line-height:8px;color:#0c0c0c;">usdjpy</span>
<span style="right:537.40px;top:308.84px;font-size:5.72px;line-height:8px;color:#0c0c0c;transform:scaleY(1.1);">104.631</span>
<span style="right:473.40px;top:308.84px;font-size:5.72px;line-height:8px;color:#0c0c0c;transform:scaleY(1.1);">108.631</span>
<span style="right:409.60px;top:308.84px;font-size:5.72px;line-height:8px;color:#0c0c0c;transform:scaleY(1.1);">104.431</span>
<span style="right:268.50px;top:308.84px;font-size:5.72px;line-height:8px;color:#0c0c0c;transform:scaleY(1.1);">2020.12.02 17:33:18</span>
<span style="right:177.20px;top:308.84px;font-size:5.72px;line-height:8px;color:#0c0c0c;transform:scaleY(1.1);">104.431</span>
<span style="right:113.50px;top:308.84px;font-size:5.72px;line-height:8px;color:#0c0c0c;transform:scaleY(1.1);">0.00</span>
<span style="right:14.70px;top:308.84px;font-size:5.72px;line-height:8px;color:#0c0c0c;transform:scaleY(1.1);">57.45</span>
<svg style="left:12px;top:318.67199999999997px" width="7.3" height="8" viewBox="0 0 14.6 16.0"><path d="M1 0.800h7.500l3.300 3.300v10.300h-10.800z" fill="#fff" stroke="#666" stroke-width="1.200"/><path d="M8.500 0.800v3.300h3.300" fill="none" stroke="#666" stroke-width="0.900"/><circle cx="11.400" cy="12" r="3.500" fill="#e8491d" stroke="#b83a14" stroke-width="0.600"/></svg>
<span style="left:22.00px;top:319.51px;font-size:5.8px;line-height:8px;color:#0c0c0c;transform:scaleY(1.1);letter-spacing:-0.004px;">247423532</span>
<span style="right:795.00px;top:319.51px;font-size:5.72px;line-height:8px;color:#0c0c0c;transform:scaleY(1.1);">2020.12.02 11:12:14</span>
<span style="right:731.00px;top:319.51px;font-size:6.35px;line-height:8px;color:#0c0c0c;">sell</span>
<span style="right:670.50px;top:319.51px;font-size:5.72px;line-height:8px;color:#0c0c0c;transform:scaleY(1.1);">2.80</span>
<span style="right:606.50px;top:319.51px;font-size:6.35px;line-height:8px;color:#0c0c0c;">gbpusd</span>
<span style="right:537.40px;top:319.51px;font-size:5.72px;line-height:8px;color:#0c0c0c;transform:scaleY(1.1);">1.33577</span>
<span style="right:473.40px;top:319.51px;font-size:5.72px;line-height:8px;color:#0c0c0c;transform:scaleY(1.1);">1.37078</span>
<span style="right:409.60px;top:319.51px;font-size:5.72px;line-height:8px;color:#0c0c0c;transform:scaleY(1.1);">1.33378</span>
<span style="right:268.50px;top:319.51px;font-size:5.72px;line-height:8px;color:#0c0c0c;transform:scaleY(1.1);">2020.12.02 14:02:13</span>
<span style="right:177.20px;top:319.51px;font-size:5.72px;line-height:8px;color:#0c0c0c;transform:scaleY(1.1);">1.33378</span>
<span style="right:113.50px;top:319.51px;font-size:5.72px;line-height:8px;color:#0c0c0c;transform:scaleY(1.1);">0.00</span>
<span style="right:14.70px;top:319.51px;font-size:5.72px;line-height:8px;color:#0c0c0c;transform:scaleY(1.1);">557.20</span>
<svg style="left:12px;top:329.339px" width="7.3" height="8" viewBox="0 0 14.6 16.0"><path d="M1 0.800h7.500l3.300 3.300v10.300h-10.800z" fill="#fff" stroke="#666" stroke-width="1.200"/><path d="M8.500 0.800v3.300h3.300" fill="none" stroke="#666" stroke-width="0.900"/><circle cx="11.400" cy="12" r="3.500" fill="#e8491d" stroke="#b83a14" stroke-width="0.600"/></svg>
<span style="left:22.00px;top:330.17px;font-size:5.8px;line-height:8px;color:#0c0c0c;transform:scaleY(1.1);letter-spacing:0.050px;">247440112</span>
<span style="right:795.00px;top:330.17px;font-size:5.72px;line-height:8px;color:#0c0c0c;transform:scaleY(1.1);">2020.12.02 12:00:04</span>
<span style="right:731.00px;top:330.17px;font-size:6.35px;line-height:8px;color:#0c0c0c;">sell</span>
<span style="right:670.50px;top:330.17px;font-size:5.72px;line-height:8px;color:#0c0c0c;transform:scaleY(1.1);">0.30</span>
<span style="right:606.50px;top:330.17px;font-size:6.35px;line-height:8px;color:#0c0c0c;">usdjpy</span>
<span style="right:537.40px;top:330.17px;font-size:5.72px;line-height:8px;color:#0c0c0c;transform:scaleY(1.1);">104.689</span>
<span style="right:473.40px;top:330.17px;font-size:5.72px;line-height:8px;color:#0c0c0c;transform:scaleY(1.1);">108.687</span>
<span style="right:409.60px;top:330.17px;font-size:5.72px;line-height:8px;color:#0c0c0c;transform:scaleY(1.1);">104.487</span>
<span style="right:268.50px;top:330.17px;font-size:5.72px;line-height:8px;color:#0c0c0c;transform:scaleY(1.1);">2020.12.02 16:45:05</span>
<span style="right:177.20px;top:330.17px;font-size:5.72px;line-height:8px;color:#0c0c0c;transform:scaleY(1.1);">104.487</span>
<span style="right:113.50px;top:330.17px;font-size:5.72px;line-height:8px;color:#0c0c0c;transform:scaleY(1.1);">0.00</span>
<span style="right:14.70px;top:330.17px;font-size:5.72px;line-height:8px;color:#0c0c0c;transform:scaleY(1.1);">58.00</span>
<svg style="left:12px;top:340.00600000000003px" width="7.3" height="8" viewBox="0 0 14.6 16.0"><path d="M1 0.800h7.500l3.300 3.300v10.300h-10.800z" fill="#fff" stroke="#666" stroke-width="1.200"/><path d="M8.500 0.800v3.300h3.300" fill="none" stroke="#666" stroke-width="0.900"/><circle cx="11.400" cy="12" r="3.500" fill="#e8491d" stroke="#b83a14" stroke-width="0.600"/></svg>
<span style="left:22.00px;top:340.84px;font-size:5.8px;line-height:8px;color:#0c0c0c;transform:scaleY(1.1);letter-spacing:-0.004px;">247446452</span>
<span style="right:795.00px;top:340.84px;font-size:5.72px;line-height:8px;color:#0c0c0c;transform:scaleY(1.1);">2020.12.02 12:19:25</span>
<span style="right:731.00px;top:340.84px;font-size:6.35px;line-height:8px;color:#0c0c0c;">sell</span>
<span style="right:670.50px;top:340.84px;font-size:5.72px;line-height:8px;color:#0c0c0c;transform:scaleY(1.1);">2.80</span>
<span style="right:606.50px;top:340.84px;font-size:6.35px;line-height:8px;color:#0c0c0c;">gbpusd</span>
<span style="right:537.40px;top:340.84px;font-size:5.72px;line-height:8px;color:#0c0c0c;transform:scaleY(1.1);">1.33608</span>
<span style="right:473.40px;top:340.84px;font-size:5.72px;line-height:8px;color:#0c0c0c;transform:scaleY(1.1);">1.37107</span>
<span style="right:409.60px;top:340.84px;font-size:5.72px;line-height:8px;color:#0c0c0c;transform:scaleY(1.1);">1.33407</span>
<span style="right:268.50px;top:340.84px;font-size:5.72px;line-height:8px;color:#0c0c0c;transform:scaleY(1.1);">2020.12.02 14:01:59</span>
<span style="right:177.20px;top:340.84px;font-size:5.72px;line-height:8px;color:#0c0c0c;transform:scaleY(1.1);">1.33407</span>
<span style="right:113.50px;top:340.84px;font-size:5.72px;line-height:8px;color:#0c0c0c;transform:scaleY(1.1);">0.00</span>
<span style="right:14.70px;top:340.84px;font-size:5.72px;line-height:8px;color:#0c0c0c;transform:scaleY(1.1);">562.80</span>
<svg style="left:12px;top:350.673px" width="7.3" height="8" viewBox="0 0 14.6 16.0"><path d="M1 0.800h7.500l3.300 3.300v10.300h-10.800z" fill="#fff" stroke="#666" stroke-width="1.200"/><path d="M8.500 0.800v3.300h3.300" fill="none" stroke="#666" stroke-width="0.900"/><circle cx="11.400" cy="12" r="3.500" fill="#e8491d" stroke="#b83a14" stroke-width="0.600"/></svg>
<span style="left:22.00px;top:351.51px;font-size:5.8px;line-height:8px;color:#0c0c0c;transform:scaleY(1.1);letter-spacing:-0.004px;">247465613</span>
<span style="right:795.00px;top:351.51px;font-size:5.72px;line-height:8px;color:#0c0c0c;transform:scaleY(1.1);">2020.12.02 13:23:53</span>
<span style="right:731.00px;top:351.51px;font-size:6.35px;line-height:8px;color:#0c0c0c;">sell</span>
<span style="right:670.50px;top:351.51px;font-size:5.72px;line-height:8px;color:#0c0c0c;transform:scaleY(1.1);">0.30</span>
<span style="right:606.50px;top:351.51px;font-size:6.35px;line-height:8px;color:#0c0c0c;">usdjpy</span>
<span style="right:537.40px;top:351.51px;font-size:5.72px;line-height:8px;color:#0c0c0c;transform:scaleY(1.1);">104.720</span>
<span style="right:473.40px;top:351.51px;font-size:5.72px;line-height:8px;color:#0c0c0c;transform:scaleY(1.1);">108.720</span>
<span style="right:409.60px;top:351.51px;font-size:5.72px;line-height:8px;color:#0c0c0c;transform:scaleY(1.1);">104.520</span>
<span style="right:268.50px;top:351.51px;font-size:5.72px;line-height:8px;color:#0c0c0c;transform:scaleY(1.1);">2020.12.02 16:17:42</span>
<span style="right:177.20px;top:351.51px;font-size:5.72px;line-height:8px;color:#0c0c0c;transform:scaleY(1.1);">104.520</span>
<span style="right:113.50px;top:351.51px;font-size:5.72px;line-height:8px;color:#0c0c0c;transform:scaleY(1.1);">0.00</span>
<span style="right:14.70px;top:351.51px;font-size:5.72px;line-height:8px;color:#0c0c0c;transform:scaleY(1.1);">57.41</span>
<svg style="left:12px;top:361.34px" width="7.3" height="8" viewBox="0 0 14.6 16.0"><path d="M1 0.800h7.500l3.300 3.300v10.300h-10.800z" fill="#fff" stroke="#666" stroke-width="1.200"/><path d="M8.500 0.800v3.300h3.300" fill="none" stroke="#666" stroke-width="0.900"/><circle cx="11.400" cy="12" r="3.500" fill="#2f8ee8" stroke="#1d66b8" stroke-width="0.600"/></svg>
<span style="left:22.00px;top:362.17px;font-size:5.8px;line-height:8px;color:#0c0c0c;transform:scaleY(1.1);letter-spacing:-0.004px;">247467157</span>
<span style="right:795.00px;top:362.17px;font-size:5.72px;line-height:8px;color:#0c0c0c;transform:scaleY(1.1);">2020.12.02 13:29:33</span>
<span style="right:731.00px;top:362.17px;font-size:6.35px;line-height:8px;color:#0c0c0c;">buy</span>
<span style="right:670.50px;top:362.17px;font-size:5.72px;line-height:8px;color:#0c0c0c;transform:scaleY(1.1);">0.30</span>
<span style="right:606.50px;top:362.17px;font-size:6.35px;line-height:8px;color:#0c0c0c;">eurusd</span>
<span style="right:537.40px;top:362.17px;font-size:5.72px;line-height:8px;color:#0c0c0c;transform:scaleY(1.1);">1.20439</span>
<span style="right:473.40px;top:362.17px;font-size:5.72px;line-height:8px;color:#0c0c0c;transform:scaleY(1.1);">1.16445</span>
<span style="right:409.60px;top:362.17px;font-size:5.72px;line-height:8px;color:#0c0c0c;transform:scaleY(1.1);">1.20645</span>
<span style="right:268.50px;top:362.17px;font-size:5.72px;line-height:8px;color:#0c0c0c;transform:scaleY(1.1);">2020.12.02 15:11:33</span>
<span style="right:177.20px;top:362.17px;font-size:5.72px;line-height:8px;color:#0c0c0c;transform:scaleY(1.1);">1.20645</span>
<span style="right:113.50px;top:362.17px;font-size:5.72px;line-height:8px;color:#0c0c0c;transform:scaleY(1.1);">0.00</span>
<span style="right:14.70px;top:362.17px;font-size:5.72px;line-height:8px;color:#0c0c0c;transform:scaleY(1.1);">61.80</span>
<svg style="left:12px;top:372.007px" width="7.3" height="8" viewBox="0 0 14.6 16.0"><path d="M1 0.800h7.500l3.300 3.300v10.300h-10.800z" fill="#fff" stroke="#666" stroke-width="1.200"/><path d="M8.500 0.800v3.300h3.300" fill="none" stroke="#666" stroke-width="0.900"/><circle cx="11.400" cy="12" r="3.500" fill="#2f8ee8" stroke="#1d66b8" stroke-width="0.600"/></svg>
<span style="left:22.00px;top:372.84px;font-size:5.8px;line-height:8px;color:#0c0c0c;transform:scaleY(1.1);letter-spacing:-0.004px;">247489020</span>
<span style="right:795.00px;top:372.84px;font-size:5.72px;line-height:8px;color:#0c0c0c;transform:scaleY(1.1);">2020.12.02 14:35:34</span>
<span style="right:731.00px;top:372.84px;font-size:6.35px;line-height:8px;color:#0c0c0c;">buy</span>
<span style="right:670.50px;top:372.84px;font-size:5.72px;line-height:8px;color:#0c0c0c;transform:scaleY(1.1);">0.30</span>
<span style="right:606.50px;top:372.84px;font-size:6.35px;line-height:8px;color:#0c0c0c;">eurusd</span>
<span style="right:537.40px;top:372.84px;font-size:5.72px;line-height:8px;color:#0c0c0c;transform:scaleY(1.1);">1.20408</span>
<span style="right:473.40px;top:372.84px;font-size:5.72px;line-height:8px;color:#0c0c0c;transform:scaleY(1.1);">1.16408</span>
<span style="right:409.60px;top:372.84px;font-size:5.72px;line-height:8px;color:#0c0c0c;transform:scaleY(1.1);">1.20608</span>
<span style="right:268.50px;top:372.84px;font-size:5.72px;line-height:8px;color:#0c0c0c;transform:scaleY(1.1);">2020.12.02 14:57:22</span>
<span style="right:177.20px;top:372.84px;font-size:5.72px;line-height:8px;color:#0c0c0c;transform:scaleY(1.1);">1.20608</span>
<span style="right:113.50px;top:372.84px;font-size:5.72px;line-height:8px;color:#0c0c0c;transform:scaleY(1.1);">0.00</span>
<span style="right:14.70px;top:372.84px;font-size:5.72px;line-height:8px;color:#0c0c0c;transform:scaleY(1.1);">60.00</span>
<svg style="left:12px;top:382.67400000000004px" width="7.3" height="8" viewBox="0 0 14.6 16.0"><path d="M1 0.800h7.500l3.300 3.300v10.300h-10.800z" fill="#fff" stroke="#666" stroke-width="1.200"/><path d="M8.500 0.800v3.300h3.300" fill="none" stroke="#666" stroke-width="0.900"/><circle cx="11.400" cy="12" r="3.500" fill="#e8491d" stroke="#b83a14" stroke-width="0.600"/></svg>
<span style="left:22.00px;top:383.51px;font-size:5.8px;line-height:8px;color:#0c0c0c;transform:scaleY(1.1);letter-spacing:-0.004px;">247496486</span>
<span style="right:795.00px;top:383.51px;font-size:5.72px;line-height:8px;color:#0c0c0c;transform:scaleY(1.1);">2020.12.02 14:57:32</span>
<span style="right:731.00px;top:383.51px;font-size:6.35px;line-height:8px;color:#0c0c0c;">sell</span>
<span style="right:670.50px;top:383.51px;font-size:5.72px;line-height:8px;color:#0c0c0c;transform:scaleY(1.1);">1.60</span>
<span style="right:606.50px;top:383.51px;font-size:6.35px;line-height:8px;color:#0c0c0c;">gbpusd</span>
<span style="right:537.40px;top:383.51px;font-size:5.72px;line-height:8px;color:#0c0c0c;transform:scaleY(1.1);">1.33277</span>
<span style="right:473.40px;top:383.51px;font-size:5.72px;line-height:8px;color:#0c0c0c;transform:scaleY(1.1);">1.36777</span>
<span style="right:409.60px;top:383.51px;font-size:5.72px;line-height:8px;color:#0c0c0c;transform:scaleY(1.1);">1.33077</span>
<span style="right:268.50px;top:383.51px;font-size:5.72px;line-height:8px;color:#0c0c0c;transform:scaleY(1.1);">2020.12.02 15:47:11</span>
<span style="right:177.20px;top:383.51px;font-size:5.72px;line-height:8px;color:#0c0c0c;transform:scaleY(1.1);">1.33077</span>
<span style="right:113.50px;top:383.51px;font-size:5.72px;line-height:8px;color:#0c0c0c;transform:scaleY(1.1);">0.00</span>
<span style="right:14.70px;top:383.51px;font-size:5.72px;line-height:8px;color:#0c0c0c;transform:scaleY(1.1);">320.00</span>
<svg style="left:12px;top:393.341px" width="7.3" height="8" viewBox="0 0 14.6 16.0"><path d="M1 0.800h7.500l3.300 3.300v10.300h-10.800z" fill="#fff" stroke="#666" stroke-width="1.200"/><path d="M8.500 0.800v3.300h3.300" fill="none" stroke="#666" stroke-width="0.900"/><circle cx="11.400" cy="12" r="3.500" fill="#e8491d" stroke="#b83a14" stroke-width="0.600"/></svg>
<span style="left:22.00px;top:394.17px;font-size:5.8px;line-height:8px;color:#0c0c0c;transform:scaleY(1.1);letter-spacing:-0.004px;">247497886</span>
<span style="right:795.00px;top:394.17px;font-size:5.72px;line-height:8px;color:#0c0c0c;transform:scaleY(1.1);">2020.12.02 15:00:16</span>
<span style="right:731.00px;top:394.17px;font-size:6.35px;line-height:8px;color:#0c0c0c;">sell</span>
<span style="right:670.50px;top:394.17px;font-size:5.72px;line-height:8px;color:#0c0c0c;transform:scaleY(1.1);">2.80</span>
<span style="right:606.50px;top:394.17px;font-size:6.35px;line-height:8px;color:#0c0c0c;">gbpusd</span>
<span style="right:537.40px;top:394.17px;font-size:5.72px;line-height:8px;color:#0c0c0c;transform:scaleY(1.1);">1.33318</span>
<span style="right:473.40px;top:394.17px;font-size:5.72px;line-height:8px;color:#0c0c0c;transform:scaleY(1.1);">1.36818</span>
<span style="right:409.60px;top:394.17px;font-size:5.72px;line-height:8px;color:#0c0c0c;transform:scaleY(1.1);">1.33118</span>
<span style="right:268.50px;top:394.17px;font-size:5.72px;line-height:8px;color:#0c0c0c;transform:scaleY(1.1);">2020.12.02 15:46:56</span>
<span style="right:177.20px;top:394.17px;font-size:5.72px;line-height:8px;color:#0c0c0c;transform:scaleY(1.1);">1.33118</span>
<span style="right:113.50px;top:394.17px;font-size:5.72px;line-height:8px;color:#0c0c0c;transform:scaleY(1.1);">0.00</span>
<span style="right:14.70px;top:394.17px;font-size:5.72px;line-height:8px;color:#0c0c0c;transform:scaleY(1.1);">560.00</span>
<svg style="left:12px;top:404.008px" width="7.3" height="8" viewBox="0 0 14.6 16.0"><path d="M1 0.800h7.500l3.300 3.300v10.300h-10.800z" fill="#fff" stroke="#666" stroke-width="1.200"/><path d="M8.500 0.800v3.300h3.300" fill="none" stroke="#666" stroke-width="0.900"/><circle cx="11.400" cy="12" r="3.500" fill="#e8491d" stroke="#b83a14" stroke-width="0.600"/></svg>
<span style="left:22.00px;top:404.84px;font-size:5.8px;line-height:8px;color:#0c0c0c;transform:scaleY(1.1);letter-spacing:-0.004px;">247514227</span>
<span style="right:795.00px;top:404.84px;font-size:5.72px;line-height:8px;color:#0c0c0c;transform:scaleY(1.1);">2020.12.02 15:47:27</span>
<span style="right:731.00px;top:404.84px;font-size:6.35px;line-height:8px;color:#0c0c0c;">sell</span>
<span style="right:670.50px;top:404.84px;font-size:5.72px;line-height:8px;color:#0c0c0c;transform:scaleY(1.1);">1.60</span>
<span style="right:606.50px;top:404.84px;font-size:6.35px;line-height:8px;color:#0c0c0c;">gbpusd</span>
<span style="right:537.40px;top:404.84px;font-size:5.72px;line-height:8px;color:#0c0c0c;transform:scaleY(1.1);">1.33033</span>
<span style="right:473.40px;top:404.84px;font-size:5.72px;line-height:8px;color:#0c0c0c;transform:scaleY(1.1);">1.36532</span>
<span style="right:409.60px;top:404.84px;font-size:5.72px;line-height:8px;color:#0c0c0c;transform:scaleY(1.1);">1.32832</span>
<span style="right:268.50px;top:404.84px;font-size:5.72px;line-height:8px;color:#0c0c0c;transform:scaleY(1.1);">2020.12.07 10:27:05</span>
<span style="right:177.20px;top:404.84px;font-size:5.72px;line-height:8px;color:#0c0c0c;transform:scaleY(1.1);">1.32832</span>
<span style="right:113.50px;top:404.84px;font-size:5.72px;line-height:8px;color:#0c0c0c;transform:scaleY(1.1);">0.00</span>
<span style="right:14.70px;top:404.84px;font-size:5.72px;line-height:8px;color:#0c0c0c;transform:scaleY(1.1);">321.60</span>
<svg style="left:12px;top:414.675px" width="7.3" height="8" viewBox="0 0 14.6 16.0"><path d="M1 0.800h7.500l3.300 3.300v10.300h-10.800z" fill="#fff" stroke="#666" stroke-width="1.200"/><path d="M8.500 0.800v3.300h3.300" fill="none" stroke="#666" stroke-width="0.900"/><circle cx="11.400" cy="12" r="3.500" fill="#e8491d" stroke="#b83a14" stroke-width="0.600"/></svg>
<span style="left:22.00px;top:415.51px;font-size:5.8px;line-height:8px;color:#fff;transform:scaleY(1.1);letter-spacing:-0.004px;">247519793</span>
<span style="right:795.00px;top:415.51px;font-size:5.72px;line-height:8px;color:#fff;transform:scaleY(1.1);">2020.12.02 16:02:08</span>
<span style="right:731.00px;top:415.51px;font-size:6.35px;line-height:8px;color:#fff;">sell</span>
<span style="right:670.50px;top:415.51px;font-size:5.72px;line-height:8px;color:#fff;transform:scaleY(1.1);">1.60</span>
<span style="right:606.50px;top:415.51px;font-size:6.35px;line-height:8px;color:#fff;">gbpusd</span>
<span style="right:537.40px;top:415.51px;font-size:5.72px;line-height:8px;color:#fff;transform:scaleY(1.1);">1.33062</span>
<span style="right:473.40px;top:415.51px;font-size:5.72px;line-height:8px;color:#fff;transform:scaleY(1.1);">1.36566</span>
<span style="right:409.60px;top:415.51px;font-size:5.72px;line-height:8px;color:#fff;transform:scaleY(1.1);">1.32866</span>
<span style="right:268.50px;top:415.51px;font-size:5.72px;line-height:8px;color:#fff;transform:scaleY(1.1);">2020.12.07 10:26:57</span>
<span style="right:177.20px;top:415.51px;font-size:5.72px;line-height:8px;color:#fff;transform:scaleY(1.1);">1.32866</span>
<span style="right:113.50px;top:415.51px;font-size:5.72px;line-height:8px;color:#fff;transform:scaleY(1.1);">0.00</span>
<span style="right:14.70px;top:415.51px;font-size:5.72px;line-height:8px;color:#fff;transform:scaleY(1.1);">313.60</span>
<svg style="left:12px;top:425.342px" width="7.3" height="8" viewBox="0 0 14.6 16.0"><path d="M1 0.800h7.500l3.300 3.300v10.300h-10.800z" fill="#fff" stroke="#666" stroke-width="1.200"/><path d="M8.500 0.800v3.300h3.300" fill="none" stroke="#666" stroke-width="0.900"/><circle cx="11.400" cy="12" r="3.500" fill="#e8491d" stroke="#b83a14" stroke-width="0.600"/></svg>
<span style="left:22.00px;top:426.18px;font-size:5.8px;line-height:8px;color:#0c0c0c;transform:scaleY(1.1);letter-spacing:-0.004px;">247535530</span>
<span style="right:795.00px;top:426.18px;font-size:5.72px;line-height:8px;color:#0c0c0c;transform:scaleY(1.1);">2020.12.02 17:00:14</span>
<span style="right:731.00px;top:426.18px;font-size:6.35px;line-height:8px;color:#0c0c0c;">sell</span>
<span style="right:670.50px;top:426.18px;font-size:5.72px;line-height:8px;color:#0c0c0c;transform:scaleY(1.1);">2.80</span>
<span style="right:606.50px;top:426.18px;font-size:6.35px;line-height:8px;color:#0c0c0c;">gbpusd</span>
<span style="right:537.40px;top:426.18px;font-size:5.72px;line-height:8px;color:#0c0c0c;transform:scaleY(1.1);">1.33103</span>
<span style="right:473.40px;top:426.18px;font-size:5.72px;line-height:8px;color:#0c0c0c;transform:scaleY(1.1);">1.36593</span>
<span style="right:409.60px;top:426.18px;font-size:5.72px;line-height:8px;color:#0c0c0c;transform:scaleY(1.1);">1.32893</span>
<span style="right:268.50px;top:426.18px;font-size:5.72px;line-height:8px;color:#0c0c0c;transform:scaleY(1.1);">2020.12.07 10:16:44</span>
<span style="right:177.20px;top:426.18px;font-size:5.72px;line-height:8px;color:#0c0c0c;transform:scaleY(1.1);">1.32893</span>
<span style="right:113.50px;top:426.18px;font-size:5.72px;line-height:8px;color:#0c0c0c;transform:scaleY(1.1);">0.00</span>
<span style="right:14.70px;top:426.18px;font-size:5.72px;line-height:8px;color:#0c0c0c;transform:scaleY(1.1);">588.00</span>
<svg style="left:12px;top:436.009px" width="7.3" height="8" viewBox="0 0 14.6 16.0"><path d="M1 0.800h7.500l3.300 3.300v10.300h-10.800z" fill="#fff" stroke="#666" stroke-width="1.200"/><path d="M8.500 0.800v3.300h3.300" fill="none" stroke="#666" stroke-width="0.900"/><circle cx="11.400" cy="12" r="3.500" fill="#2f8ee8" stroke="#1d66b8" stroke-width="0.600"/></svg>
<span style="left:22.00px;top:436.84px;font-size:5.8px;line-height:8px;color:#0c0c0c;transform:scaleY(1.1);letter-spacing:-0.004px;">247539713</span>
<span style="right:795.00px;top:436.84px;font-size:5.72px;line-height:8px;color:#0c0c0c;transform:scaleY(1.1);">2020.12.02 17:15:02</span>
<span style="right:731.00px;top:436.84px;font-size:6.35px;line-height:8px;color:#0c0c0c;">buy</span>
<span style="right:670.50px;top:436.84px;font-size:5.72px;line-height:8px;color:#0c0c0c;transform:scaleY(1.1);">0.30</span>
<span style="right:606.50px;top:436.84px;font-size:6.35px;line-height:8px;color:#0c0c0c;">eurusd</span>
<span style="right:537.40px;top:436.84px;font-size:5.72px;line-height:8px;color:#0c0c0c;transform:scaleY(1.1);">1.20914</span>
<span style="right:473.40px;top:436.84px;font-size:5.72px;line-height:8px;color:#0c0c0c;transform:scaleY(1.1);">1.16914</span>
<span style="right:409.60px;top:436.84px;font-size:5.72px;line-height:8px;color:#0c0c0c;transform:scaleY(1.1);">1.21114</span>
<span style="right:268.50px;top:436.84px;font-size:5.72px;line-height:8px;color:#0c0c0c;transform:scaleY(1.1);">2020.12.02 23:23:28</span>
<span style="right:177.20px;top:436.84px;font-size:5.72px;line-height:8px;color:#0c0c0c;transform:scaleY(1.1);">1.21114</span>
<span style="right:113.50px;top:436.84px;font-size:5.72px;line-height:8px;color:#0c0c0c;transform:scaleY(1.1);">0.00</span>
<span style="right:14.70px;top:436.84px;font-size:5.72px;line-height:8px;color:#0c0c0c;transform:scaleY(1.1);">60.00</span>
<svg style="left:12px;top:446.676px" width="7.3" height="8" viewBox="0 0 14.6 16.0"><path d="M1 0.800h7.500l3.300 3.300v10.300h-10.800z" fill="#fff" stroke="#666" stroke-width="1.200"/><path d="M8.500 0.800v3.300h3.300" fill="none" stroke="#666" stroke-width="0.900"/><circle cx="11.400" cy="12" r="3.500" fill="#2f8ee8" stroke="#1d66b8" stroke-width="0.600"/></svg>
<span style="left:22.00px;top:447.51px;font-size:5.8px;line-height:8px;color:#0c0c0c;transform:scaleY(1.1);letter-spacing:-0.004px;">247551863</span>
<span style="right:795.00px;top:447.51px;font-size:5.72px;line-height:8px;color:#0c0c0c;transform:scaleY(1.1);">2020.12.02 17:55:10</span>
<span style="right:731.00px;top:447.51px;font-size:6.35px;line-height:8px;color:#0c0c0c;">buy</span>
<span style="right:670.50px;top:447.51px;font-size:5.72px;line-height:8px;color:#0c0c0c;transform:scaleY(1.1);">0.30</span>
<span style="right:606.50px;top:447.51px;font-size:6.35px;line-height:8px;color:#0c0c0c;">eurusd</span>
<span style="right:537.40px;top:447.51px;font-size:5.72px;line-height:8px;color:#0c0c0c;transform:scaleY(1.1);">1.20882</span>
<span style="right:473.40px;top:447.51px;font-size:5.72px;line-height:8px;color:#0c0c0c;transform:scaleY(1.1);">1.16884</span>
<span style="right:409.60px;top:447.51px;font-size:5.72px;line-height:8px;color:#0c0c0c;transform:scaleY(1.1);">1.21084</span>
<span style="right:268.50px;top:447.51px;font-size:5.72px;line-height:8px;color:#0c0c0c;transform:scaleY(1.1);">2020.12.02 23:22:11</span>
<span style="right:177.20px;top:447.51px;font-size:5.72px;line-height:8px;color:#0c0c0c;transform:scaleY(1.1);">1.21084</span>
<span style="right:113.50px;top:447.51px;font-size:5.72px;line-height:8px;color:#0c0c0c;transform:scaleY(1.1);">0.00</span>
<span style="right:14.70px;top:447.51px;font-size:5.72px;line-height:8px;color:#0c0c0c;transform:scaleY(1.1);">60.60</span>
<svg style="left:12px;top:457.343px" width="7.3" height="8" viewBox="0 0 14.6 16.0"><path d="M1 0.800h7.500l3.300 3.300v10.300h-10.800z" fill="#fff" stroke="#666" stroke-width="1.200"/><path d="M8.500 0.800v3.300h3.300" fill="none" stroke="#666" stroke-width="0.900"/><circle cx="11.400" cy="12" r="3.500" fill="#e8491d" stroke="#b83a14" stroke-width="0.600"/></svg>
<span style="left:22.00px;top:458.18px;font-size:5.8px;line-height:8px;color:#0c0c0c;transform:scaleY(1.1);letter-spacing:-0.004px;">247552645</span>
<span style="right:795.00px;top:458.18px;font-size:5.72px;line-height:8px;color:#0c0c0c;transform:scaleY(1.1);">2020.12.02 17:57:46</span>
<span style="right:731.00px;top:458.18px;font-size:6.35px;line-height:8px;color:#0c0c0c;">sell</span>
<span style="right:670.50px;top:458.18px;font-size:5.72px;line-height:8px;color:#0c0c0c;transform:scaleY(1.1);">0.30</span>
<span style="right:606.50px;top:458.18px;font-size:6.35px;line-height:8px;color:#0c0c0c;">usdjpy</span>
<span style="right:537.40px;top:458.18px;font-size:5.72px;line-height:8px;color:#0c0c0c;transform:scaleY(1.1);">104.585</span>
<span style="right:473.40px;top:458.18px;font-size:5.72px;line-height:8px;color:#0c0c0c;transform:scaleY(1.1);">108.588</span>
<span style="right:409.60px;top:458.18px;font-size:5.72px;line-height:8px;color:#0c0c0c;transform:scaleY(1.1);">104.388</span>
<span style="right:268.50px;top:458.18px;font-size:5.72px;line-height:8px;color:#0c0c0c;transform:scaleY(1.1);">2020.12.03 09:01:08</span>
<span style="right:177.20px;top:458.18px;font-size:5.72px;line-height:8px;color:#0c0c0c;transform:scaleY(1.1);">104.388</span>
<span style="right:113.50px;top:458.18px;font-size:5.72px;line-height:8px;color:#0c0c0c;transform:scaleY(1.1);">0.00</span>
<span style="right:14.70px;top:458.18px;font-size:5.72px;line-height:8px;color:#0c0c0c;transform:scaleY(1.1);">56.62</span>
<svg style="left:12px;top:468.01px" width="7.3" height="8" viewBox="0 0 14.6 16.0"><path d="M1 0.800h7.500l3.300 3.300v10.300h-10.800z" fill="#fff" stroke="#666" stroke-width="1.200"/><path d="M8.500 0.800v3.300h3.300" fill="none" stroke="#666" stroke-width="0.900"/><circle cx="11.400" cy="12" r="3.500" fill="#e8491d" stroke="#b83a14" stroke-width="0.600"/></svg>
<span style="left:22.00px;top:468.84px;font-size:5.8px;line-height:8px;color:#0c0c0c;transform:scaleY(1.1);letter-spacing:-0.004px;">247553329</span>
<span style="right:795.00px;top:468.84px;font-size:5.72px;line-height:8px;color:#0c0c0c;transform:scaleY(1.1);">2020.12.02 18:00:00</span>
<span style="right:731.00px;top:468.84px;font-size:6.35px;line-height:8px;color:#0c0c0c;">sell</span>
<span style="right:670.50px;top:468.84px;font-size:5.72px;line-height:8px;color:#0c0c0c;transform:scaleY(1.1);">2.80</span>
<span style="right:606.50px;top:468.84px;font-size:6.35px;line-height:8px;color:#0c0c0c;">gbpusd</span>
<span style="right:537.40px;top:468.84px;font-size:5.72px;line-height:8px;color:#0c0c0c;transform:scaleY(1.1);">1.33262</span>
<span style="right:473.40px;top:468.84px;font-size:5.72px;line-height:8px;color:#0c0c0c;transform:scaleY(1.1);">1.36747</span>
<span style="right:409.60px;top:468.84px;font-size:5.72px;line-height:8px;color:#0c0c0c;transform:scaleY(1.1);">1.33047</span>
<span style="right:268.50px;top:468.84px;font-size:5.72px;line-height:8px;color:#0c0c0c;transform:scaleY(1.1);">2020.12.07 10:14:32</span>
<span style="right:177.20px;top:468.84px;font-size:5.72px;line-height:8px;color:#0c0c0c;transform:scaleY(1.1);">1.33047</span>
<span style="right:113.50px;top:468.84px;font-size:5.72px;line-height:8px;color:#0c0c0c;transform:scaleY(1.1);">0.00</span>
<span style="right:14.70px;top:468.84px;font-size:5.72px;line-height:8px;color:#0c0c0c;transform:scaleY(1.1);">602.00</span>
<svg style="left:12px;top:478.677px" width="7.3" height="8" viewBox="0 0 14.6 16.0"><path d="M1 0.800h7.500l3.300 3.300v10.300h-10.800z" fill="#fff" stroke="#666" stroke-width="1.200"/><path d="M8.500 0.800v3.300h3.300" fill="none" stroke="#666" stroke-width="0.900"/><circle cx="11.400" cy="12" r="3.500" fill="#2f8ee8" stroke="#1d66b8" stroke-width="0.600"/></svg>
<span style="left:22.00px;top:479.51px;font-size:5.8px;line-height:8px;color:#0c0c0c;transform:scaleY(1.1);letter-spacing:-0.004px;">247553610</span>
<span style="right:795.00px;top:479.51px;font-size:5.72px;line-height:8px;color:#0c0c0c;transform:scaleY(1.1);">2020.12.02 18:00:06</span>
<span style="right:731.00px;top:479.51px;font-size:6.35px;line-height:8px;color:#0c0c0c;">buy</span>
<span style="right:670.50px;top:479.51px;font-size:5.72px;line-height:8px;color:#0c0c0c;transform:scaleY(1.1);">0.30</span>
<span style="right:606.50px;top:479.51px;font-size:6.35px;line-height:8px;color:#0c0c0c;">eurusd</span>
<span style="right:537.40px;top:479.51px;font-size:5.72px;line-height:8px;color:#0c0c0c;transform:scaleY(1.1);">1.20795</span>
<span style="right:473.40px;top:479.51px;font-size:5.72px;line-height:8px;color:#0c0c0c;transform:scaleY(1.1);">1.16795</span>
<span style="right:409.60px;top:479.51px;font-size:5.72px;line-height:8px;color:#0c0c0c;transform:scaleY(1.1);">1.20995</span>
<span style="right:268.50px;top:479.51px;font-size:5.72px;line-height:8px;color:#0c0c0c;transform:scaleY(1.1);">2020.12.02 21:21:03</span>
<span style="right:177.20px;top:479.51px;font-size:5.72px;line-height:8px;color:#0c0c0c;transform:scaleY(1.1);">1.20995</span>
<span style="right:113.50px;top:479.51px;font-size:5.72px;line-height:8px;color:#0c0c0c;transform:scaleY(1.1);">0.00</span>
<span style="right:14.70px;top:479.51px;font-size:5.72px;line-height:8px;color:#0c0c0c;transform:scaleY(1.1);">60.00</span>
<svg style="left:12px;top:489.344px" width="7.3" height="8" viewBox="0 0 14.6 16.0"><path d="M1 0.800h7.500l3.300 3.300v10.300h-10.800z" fill="#fff" stroke="#666" stroke-width="1.200"/><path d="M8.500 0.800v3.300h3.300" fill="none" stroke="#666" stroke-width="0.900"/><circle cx="11.400" cy="12" r="3.500" fill="#2f8ee8" stroke="#1d66b8" stroke-width="0.600"/></svg>
<span style="left:22.00px;top:490.18px;font-size:5.8px;line-height:8px;color:#0c0c0c;transform:scaleY(1.1);letter-spacing:-0.004px;">247558016</span>
<span style="right:795.00px;top:490.18px;font-size:5.72px;line-height:8px;color:#0c0c0c;transform:scaleY(1.1);">2020.12.02 18:19:17</span>
<span style="right:731.00px;top:490.18px;font-size:6.35px;line-height:8px;color:#0c0c0c;">buy</span>
<span style="right:670.50px;top:490.18px;font-size:5.72px;line-height:8px;color:#0c0c0c;transform:scaleY(1.1);">0.30</span>
<span style="right:606.50px;top:490.18px;font-size:6.35px;line-height:8px;color:#0c0c0c;">eurgbp</span>
<span style="right:537.40px;top:490.18px;font-size:5.72px;line-height:8px;color:#0c0c0c;transform:scaleY(1.1);">0.90593</span>
<span style="right:473.40px;top:490.18px;font-size:5.72px;line-height:8px;color:#0c0c0c;transform:scaleY(1.1);">0.86586</span>
<span style="right:409.60px;top:490.18px;font-size:5.72px;line-height:8px;color:#0c0c0c;transform:scaleY(1.1);">0.90786</span>
<span style="right:268.50px;top:490.18px;font-size:5.72px;line-height:8px;color:#0c0c0c;transform:scaleY(1.1);">2020.12.07 10:02:10</span>
<span style="right:177.20px;top:490.18px;font-size:5.72px;line-height:8px;color:#0c0c0c;transform:scaleY(1.1);">0.90786</span>
<span style="right:113.50px;top:490.18px;font-size:5.72px;line-height:8px;color:#0c0c0c;transform:scaleY(1.1);">0.00</span>
<span style="right:14.70px;top:490.18px;font-size:5.72px;line-height:8px;color:#0c0c0c;transform:scaleY(1.1);">77.25</span>
<svg style="left:12px;top:500.01099999999997px" width="7.3" height="8" viewBox="0 0 14.6 16.0"><path d="M1 0.800h7.500l3.300 3.300v10.300h-10.800z" fill="#fff" stroke="#666" stroke-width="1.200"/><path d="M8.500 0.800v3.300h3.300" fill="none" stroke="#666" stroke-width="0.900"/><circle cx="11.400" cy="12" r="3.500" fill="#e8491d" stroke="#b83a14" stroke-width="0.600"/></svg>
<span style="left:22.00px;top:500.84px;font-size:5.8px;line-height:8px;color:#0c0c0c;transform:scaleY(1.1);letter-spacing:-0.004px;">247561057</span>
<span style="right:795.00px;top:500.84px;font-size:5.72px;line-height:8px;color:#0c0c0c;transform:scaleY(1.1);">2020.12.02 18:35:41</span>
<span style="right:731.00px;top:500.84px;font-size:6.35px;line-height:8px;color:#0c0c0c;">sell</span>
<span style="right:670.50px;top:500.84px;font-size:5.72px;line-height:8px;color:#0c0c0c;transform:scaleY(1.1);">1.05</span>
<span style="right:606.50px;top:500.84px;font-size:6.35px;line-height:8px;color:#0c0c0c;">nzdusd</span>
<span style="right:537.40px;top:500.84px;font-size:5.72px;line-height:8px;color:#0c0c0c;transform:scaleY(1.1);">0.70525</span>
<span style="right:473.40px;top:500.84px;font-size:5.72px;line-height:8px;color:#0c0c0c;transform:scaleY(1.1);">0.74525</span>
<span style="right:409.60px;top:500.84px;font-size:5.72px;line-height:8px;color:#0c0c0c;transform:scaleY(1.1);">0.70325</span>
<span style="right:268.50px;top:500.84px;font-size:5.72px;line-height:8px;color:#0c0c0c;transform:scaleY(1.1);">2020.12.04 15:51:53</span>
<span style="right:177.20px;top:500.84px;font-size:5.72px;line-height:8px;color:#0c0c0c;transform:scaleY(1.1);">0.70325</span>
<span style="right:113.50px;top:500.84px;font-size:5.72px;line-height:8px;color:#0c0c0c;transform:scaleY(1.1);">0.00</span>
<span style="right:14.70px;top:500.84px;font-size:5.72px;line-height:8px;color:#0c0c0c;transform:scaleY(1.1);">210.00</span>
<svg style="left:12px;top:510.678px" width="7.3" height="8" viewBox="0 0 14.6 16.0"><path d="M1 0.800h7.500l3.300 3.300v10.300h-10.800z" fill="#fff" stroke="#666" stroke-width="1.200"/><path d="M8.500 0.800v3.300h3.300" fill="none" stroke="#666" stroke-width="0.900"/><circle cx="11.400" cy="12" r="3.500" fill="#e8491d" stroke="#b83a14" stroke-width="0.600"/></svg>
<span style="left:22.00px;top:511.51px;font-size:5.8px;line-height:8px;color:#0c0c0c;transform:scaleY(1.1);letter-spacing:-0.004px;">247565742</span>
<span style="right:795.00px;top:511.51px;font-size:5.72px;line-height:8px;color:#0c0c0c;transform:scaleY(1.1);">2020.12.02 19:00:00</span>
<span style="right:731.00px;top:511.51px;font-size:6.35px;line-height:8px;color:#0c0c0c;">sell</span>
<span style="right:670.50px;top:511.51px;font-size:5.72px;line-height:8px;color:#0c0c0c;transform:scaleY(1.1);">2.80</span>
<span style="right:606.50px;top:511.51px;font-size:6.35px;line-height:8px;color:#0c0c0c;">gbpusd</span>
<span style="right:537.40px;top:511.51px;font-size:5.72px;line-height:8px;color:#0c0c0c;transform:scaleY(1.1);">1.33462</span>
<span style="right:473.40px;top:511.51px;font-size:5.72px;line-height:8px;color:#0c0c0c;transform:scaleY(1.1);">1.36958</span>
<span style="right:409.60px;top:511.51px;font-size:5.72px;line-height:8px;color:#0c0c0c;transform:scaleY(1.1);">1.33258</span>
<span style="right:268.50px;top:511.51px;font-size:5.72px;line-height:8px;color:#0c0c0c;transform:scaleY(1.1);">2020.12.07 10:11:53</span>
<span style="right:177.20px;top:511.51px;font-size:5.72px;line-height:8px;color:#0c0c0c;transform:scaleY(1.1);">1.33258</span>
<span style="right:113.50px;top:511.51px;font-size:5.72px;line-height:8px;color:#0c0c0c;transform:scaleY(1.1);">0.00</span>
<span style="right:14.70px;top:511.51px;font-size:5.72px;line-height:8px;color:#0c0c0c;transform:scaleY(1.1);">571.20</span>
<svg style="left:12px;top:521.345px" width="7.3" height="8" viewBox="0 0 14.6 16.0"><path d="M1 0.800h7.500l3.300 3.300v10.300h-10.800z" fill="#fff" stroke="#666" stroke-width="1.200"/><path d="M8.500 0.800v3.300h3.300" fill="none" stroke="#666" stroke-width="0.900"/><circle cx="11.400" cy="12" r="3.500" fill="#e8491d" stroke="#b83a14" stroke-width="0.600"/></svg>
<span style="left:22.00px;top:522.18px;font-size:5.8px;line-height:8px;color:#0c0c0c;transform:scaleY(1.1);letter-spacing:-0.004px;">247567208</span>
<span style="right:795.00px;top:522.18px;font-size:5.72px;line-height:8px;color:#0c0c0c;transform:scaleY(1.1);">2020.12.02 19:08:45</span>
<span style="right:731.00px;top:522.18px;font-size:6.35px;line-height:8px;color:#0c0c0c;">sell</span>
<span style="right:670.50px;top:522.18px;font-size:5.72px;line-height:8px;color:#0c0c0c;transform:scaleY(1.1);">1.05</span>
<span style="right:606.50px;top:522.18px;font-size:6.35px;line-height:8px;color:#0c0c0c;">nzdusd</span>
<span style="right:537.40px;top:522.18px;font-size:5.72px;line-height:8px;color:#0c0c0c;transform:scaleY(1.1);">0.70576</span>
<span style="right:473.40px;top:522.18px;font-size:5.72px;line-height:8px;color:#0c0c0c;transform:scaleY(1.1);">0.74576</span>
<span style="right:409.60px;top:522.18px;font-size:5.72px;line-height:8px;color:#0c0c0c;transform:scaleY(1.1);">0.70376</span>
<span style="right:268.50px;top:522.18px;font-size:5.72px;line-height:8px;color:#0c0c0c;transform:scaleY(1.1);">2020.12.04 15:47:16</span>
<span style="right:177.20px;top:522.18px;font-size:5.72px;line-height:8px;color:#0c0c0c;transform:scaleY(1.1);">0.70376</span>
<span style="right:113.50px;top:522.18px;font-size:5.72px;line-height:8px;color:#0c0c0c;transform:scaleY(1.1);">0.00</span>
<span style="right:14.70px;top:522.18px;font-size:5.72px;line-height:8px;color:#0c0c0c;transform:scaleY(1.1);">210.00</span>
</div>
<div style="position:absolute;left:10.30px;top:133.50px;width:1004.70px;height:12.60px;background:#fff;"></div>
<div style="position:absolute;left:10.30px;top:146.00px;width:1004.70px;height:0.50px;background:#e8e8e8;"></div>
<div style="position:absolute;left:10.30px;top:133.30px;width:1017.70px;height:0.50px;background:#e6e6e6;"></div>
<span style="left:14.00px;top:136.60px;font-size:6.1px;line-height:8px;color:#15202c;letter-spacing:-0.023px;">Order</span>
<span style="left:35.00px;top:136.80px;font-size:4.5px;line-height:8px;color:#777;">/</span>
<span style="right:795.41px;top:136.60px;font-size:6.1px;line-height:8px;color:#15202c;letter-spacing:0.090px;">Time</span>
<span style="right:731.78px;top:136.60px;font-size:6.1px;line-height:8px;color:#15202c;letter-spacing:-0.275px;">Type</span>
<span style="right:671.39px;top:136.60px;font-size:6.1px;line-height:8px;color:#15202c;letter-spacing:-0.389px;">Size</span>
<span style="right:606.69px;top:136.60px;font-size:6.1px;line-height:8px;color:#15202c;letter-spacing:0.312px;">Symbol</span>
<span style="right:537.87px;top:136.60px;font-size:6.1px;line-height:8px;color:#15202c;letter-spacing:0.025px;">Price</span>
<span style="right:473.86px;top:136.60px;font-size:6.1px;line-height:8px;color:#15202c;letter-spacing:0.039px;">S / L</span>
<span style="right:410.19px;top:136.60px;font-size:6.1px;line-height:8px;color:#15202c;letter-spacing:-0.092px;">T / P</span>
<span style="right:268.91px;top:136.60px;font-size:6.1px;line-height:8px;color:#15202c;letter-spacing:0.090px;">Time</span>
<span style="right:177.67px;top:136.60px;font-size:6.1px;line-height:8px;color:#15202c;letter-spacing:0.025px;">Price</span>
<span style="right:113.77px;top:136.60px;font-size:6.1px;line-height:8px;color:#15202c;letter-spacing:0.227px;">Commission</span>
<span style="right:14.99px;top:136.60px;font-size:6.1px;line-height:8px;color:#15202c;letter-spacing:0.212px;">Profit</span>
<div style="position:absolute;left:92.50px;top:133.50px;width:0.60px;height:12.60px;background:#f0f0f0;"></div>
<div style="position:absolute;left:234.90px;top:133.50px;width:0.60px;height:12.60px;background:#f0f0f0;"></div>
<div style="position:absolute;left:298.40px;top:133.50px;width:0.60px;height:12.60px;background:#f0f0f0;"></div>
<div style="position:absolute;left:359.40px;top:133.50px;width:0.60px;height:12.60px;background:#f0f0f0;"></div>
<div style="position:absolute;left:423.40px;top:133.50px;width:0.60px;height:12.60px;background:#f0f0f0;"></div>
<div style="position:absolute;left:492.30px;top:133.50px;width:0.60px;height:12.60px;background:#f0f0f0;"></div>
<div style="position:absolute;left:556.50px;top:133.50px;width:0.60px;height:12.60px;background:#f0f0f0;"></div>
<div style="position:absolute;left:619.80px;top:133.50px;width:0.60px;height:12.60px;background:#f0f0f0;"></div>
<div style="position:absolute;left:761.40px;top:133.50px;width:0.60px;height:12.60px;background:#f0f0f0;"></div>
<div style="position:absolute;left:852.20px;top:133.50px;width:0.60px;height:12.60px;background:#f0f0f0;"></div>
<div style="position:absolute;left:915.90px;top:133.50px;width:0.60px;height:12.60px;background:#f0f0f0;"></div>
<div style="position:absolute;left:93.10px;top:133.50px;width:0.70px;height:12.60px;background:#e6e6e6;"></div>
<div style="position:absolute;left:1015.00px;top:133.50px;width:10.00px;height:395.00px;background:#f0f0f0;"></div>
<div style="position:absolute;left:1025.00px;top:133.50px;width:3.00px;height:395.00px;background:#f7f7f7;"></div>
<div style="position:absolute;left:1016.00px;top:169.00px;width:7.20px;height:9.00px;background:#cdcdcd;"></div>
<svg style="left:1016.8px;top:137.2px" width="4.5" height="2.8" viewBox="0 0 9.0 5.6"><path d="M0.800 4.800l3.700-3.800 3.700 3.800" fill="none" stroke="#3a3a3a" stroke-width="1.800"/></svg>
<svg style="left:1016.8px;top:522px" width="4.5" height="2.8" viewBox="0 0 9.0 5.6"><path d="M0.800 0.800l3.700 3.800 3.700-3.800" fill="none" stroke="#3a3a3a" stroke-width="1.800"/></svg>
<div style="position:absolute;left:10.30px;top:528.40px;width:1017.70px;height:13.20px;background:#f0f0f0;"></div>
<div style="position:absolute;left:10.30px;top:528.20px;width:1017.70px;height:0.70px;background:#6a6a6a;"></div>
<div style="position:absolute;left:74.60px;top:528.00px;width:56.30px;height:12.00px;background:#fff;box-shadow:0 0 0 0.700px #222;clip-path:inset(0.4px -2px -2px -2px);"></div>
<span style="left:17.00px;top:530.70px;font-size:5.9px;line-height:8px;color:#808080;letter-spacing:-0.174px;">Trade</span>
<span style="left:43.00px;top:530.70px;font-size:5.9px;line-height:8px;color:#808080;letter-spacing:0.082px;">Exposure</span>
<span style="left:79.50px;top:530.70px;font-size:5.9px;line-height:8px;color:#15202c;letter-spacing:0.263px;">Account History</span>
<span style="left:136.00px;top:530.70px;font-size:5.9px;line-height:8px;color:#808080;letter-spacing:0.249px;">News</span>
<span style="left:168.50px;top:530.70px;font-size:5.9px;line-height:8px;color:#808080;letter-spacing:0.084px;">Alerts</span>
<span style="left:195.50px;top:530.70px;font-size:5.9px;line-height:8px;color:#808080;letter-spacing:0.195px;">Mailbox</span>
<span style="left:232.50px;top:530.70px;font-size:5.9px;line-height:8px;color:#808080;letter-spacing:0.194px;">Market</span>
<span style="left:263.00px;top:530.70px;font-size:5.9px;line-height:8px;color:#808080;letter-spacing:0.094px;">Articles</span>
<span style="left:295.00px;top:530.70px;font-size:5.9px;line-height:8px;color:#808080;letter-spacing:-0.087px;">Code Base</span>
<span style="left:335.00px;top:530.70px;font-size:5.9px;line-height:8px;color:#808080;letter-spacing:-0.167px;">Experts</span>
<span style="left:365.00px;top:530.70px;font-size:5.9px;line-height:8px;color:#808080;letter-spacing:0.108px;">Journal</span>
<div style="position:absolute;left:37.30px;top:530.50px;width:0.70px;height:7.00px;background:#b4b4b4;"></div>
<div style="position:absolute;left:162.50px;top:530.50px;width:0.70px;height:7.00px;background:#b4b4b4;"></div>
<div style="position:absolute;left:190.00px;top:530.50px;width:0.70px;height:7.00px;background:#b4b4b4;"></div>
<div style="position:absolute;left:226.50px;top:530.50px;width:0.70px;height:7.00px;background:#b4b4b4;"></div>
<div style="position:absolute;left:257.00px;top:530.50px;width:0.70px;height:7.00px;background:#b4b4b4;"></div>
<div style="position:absolute;left:289.00px;top:530.50px;width:0.70px;height:7.00px;background:#b4b4b4;"></div>
<div style="position:absolute;left:329.00px;top:530.50px;width:0.70px;height:7.00px;background:#b4b4b4;"></div>
<div style="position:absolute;left:359.50px;top:530.50px;width:0.70px;height:7.00px;background:#b4b4b4;"></div>
<div style="position:absolute;left:391.00px;top:530.50px;width:0.70px;height:7.00px;background:#b4b4b4;"></div>
<span style="left:151.80px;top:532.50px;font-size:4.2px;line-height:8px;color:#e02020;font-weight:bold;">99</span>
<span style="left:218.50px;top:532.50px;font-size:4.2px;line-height:8px;color:#e02020;font-weight:bold;">7</span>
<div style="position:absolute;left:0.00px;top:541.50px;width:1028.00px;height:12.50px;background:#f0f0f0;"></div>
<div style="position:absolute;left:0.00px;top:541.30px;width:1028.00px;height:0.60px;background:#d4d4d4;"></div>
<span style="left:3.00px;top:545.50px;font-size:5.9px;line-height:8px;color:#15101c;letter-spacing:0.009px;">For Help, press F1</span>
<span style="left:659.50px;top:545.50px;font-size:5.9px;line-height:8px;color:#15101c;letter-spacing:-0.032px;">Default</span>
<div style="position:absolute;left:654.00px;top:543.50px;width:0.60px;height:9.00px;background:#cfcfcf;"></div>
<div style="position:absolute;left:717.30px;top:543.50px;width:0.60px;height:9.00px;background:#cfcfcf;"></div>
<div style="position:absolute;left:772.00px;top:543.50px;width:0.60px;height:9.00px;background:#cfcfcf;"></div>
<div style="position:absolute;left:810.30px;top:543.50px;width:0.60px;height:9.00px;background:#cfcfcf;"></div>
<div style="position:absolute;left:848.30px;top:543.50px;width:0.60px;height:9.00px;background:#cfcfcf;"></div>
<div style="position:absolute;left:884.30px;top:543.50px;width:0.60px;height:9.00px;background:#cfcfcf;"></div>
<div style="position:absolute;left:922.00px;top:543.50px;width:0.60px;height:9.00px;background:#cfcfcf;"></div>
<div style="position:absolute;left:956.30px;top:543.50px;width:0.60px;height:9.00px;background:#cfcfcf;"></div>
<svg style="left:960.3px;top:546.3px" width="12.5" height="5.4" viewBox="0 0 25.0 10.8"><rect x="0" y="0" width="24" height="10" fill="#3a8a3a"/><path d="M0 9h4v-2h4v-1.500h4v-1.500h4v-1.500h4v-1.500h4v8z" fill="#3f6fd0"/><path d="M0 3h24M0 6h24" stroke="#8fd08f" stroke-width="0.600"/></svg>
<span style="left:975.30px;top:545.50px;font-size:5.9px;line-height:8px;color:#15101c;letter-spacing:-0.052px;">1361/3 kb</span>
<div style="position:absolute;left:0.00px;top:554.00px;width:1028.00px;height:22.00px;background:linear-gradient(90deg,#4b1c2d 0px,#481e2c 300px,#47262a 335px,#4a3029 375px,#462d25 470px,#432720 600px,#451f1e 685px,#3d1c1c 722px,#262222 746px,#1c2e34 790px,#1e353c 860px,#1c343b 1028px);"></div>
<svg style="left:10.3px;top:561.3px" width="8.6" height="8.6" viewBox="0 0 17.2 17.2"><path d="M0 2.400l7-1v6.600h-7zM8 1.300l9.200-1.300v8h-9.200zM0 9h7v6.600l-7-1zM8 9h9.200v8l-9.200-1.300z" fill="#fff"/></svg>
<svg style="left:36px;top:560.5px" width="9" height="9.5" viewBox="0 0 18.0 19.0"><circle cx="11.500" cy="6.500" r="5" fill="none" stroke="#fff" stroke-width="1.700"/><path d="M8 10.500l-7 7.500" stroke="#fff" stroke-width="1.800"/></svg>
<svg style="left:60.5px;top:558.8px" width="13.5" height="13.5" viewBox="0 0 27.0 27.0"><defs><linearGradient id="eg" x1="0" y1="0" x2="0.300" y2="1"><stop offset="0" stop-color="#2aa8e8"/><stop offset="1" stop-color="#0b55a8"/></linearGradient><linearGradient id="eg2" x1="0" y1="0" x2="1" y2="0.400"><stop offset="0" stop-color="#2fc0e8"/><stop offset="1" stop-color="#4fd86a"/></linearGradient></defs><path d="M13.500 0.500a13 13 0 1 0 9.500 22c-3 2-8.500 1-10.500-3-1.500-3 0-6.500 3-7.500 2-0.600 4 0.300 4 2.500h7.500c1-8-5-14-13.500-14z" fill="url(#eg)"/><path d="M1.500 9.500c2.500-7 9-9.500 14.500-9 7 0.800 11.500 6.500 11 14h-8c0.500-5-4-7.500-8.500-6.500-4 0.800-7 3.500-9 1.500z" fill="url(#eg2)"/></svg>
<svg style="left:87.5px;top:559.8px" width="12.5" height="10.5" viewBox="0 0 25.0 21.0"><path d="M1 2.500h8l2 2.500h13v14.500h-23z" fill="#f4b63a"/><path d="M1 8h23v12h-23z" fill="#fcd45e"/><path d="M6 13h13v7h-13z" fill="#3a9fe8"/><path d="M9 16.500h7v3.500h-7z" fill="#fcd45e"/></svg>
<div style="position:absolute;left:83.00px;top:574.80px;width:21.50px;height:1.20px;background:#8ac0ea;"></div>
<svg style="left:113.5px;top:558.8px" width="12.5" height="12.8" viewBox="0 0 25.0 25.6"><path d="M8 6v-2.500c0-3.500 9-3.500 9 0v2.500" fill="none" stroke="#e8e8e8" stroke-width="1.500"/><path d="M1.500 6h22v18h-22z" fill="#f2f2f2"/><rect x="7.500" y="10" width="4.500" height="4.500" fill="#f25022"/><rect x="13" y="10" width="4.500" height="4.500" fill="#7fba00"/><rect x="7.500" y="15.500" width="4.500" height="4.500" fill="#00a4ef"/><rect x="13" y="15.500" width="4.500" height="4.500" fill="#ffb900"/></svg>
<svg style="left:139.8px;top:560.3px" width="12.5" height="10" viewBox="0 0 25.0 20.0"><path d="M0 4l12.500-4 12.500 4v16h-25z" fill="#1f8fe8"/><path d="M0 4.500l12.500 9 12.500-9v15.500h-25z" fill="#2da0f2"/><path d="M1.500 4l11 8 11-8-11-3z" fill="#fff"/></svg>
<svg style="left:166px;top:560px" width="12.5" height="10.5" viewBox="0 0 25.0 21.0"><path d="M6.300 0l6.200 4-6.200 4-6.300-4zM18.700 0l6.300 4-6.300 4-6.200-4zM6.300 8l6.200 4-6.200 4-6.300-4zM18.700 8l6.300 4-6.300 4-6.200-4zM12.500 13.500l5 3.300-5 3.700-5-3.700z" fill="#fff"/></svg>
<svg style="left:194px;top:559.5px" width="8" height="12" viewBox="0 0 16.0 24.0"><path d="M10 0l-8 12h5l-5 12 12-15h-6l6-9z" fill="#fff"/></svg>
<svg style="left:218.5px;top:559.5px" width="10" height="12" viewBox="0 0 20.0 24.0"><path d="M1 5l12-5 6 2v20l-6 2-12-5 11 1.500v-16l-7 2v10l-4 2z" fill="#e8401c"/></svg>
<svg style="left:243.8px;top:559.5px" width="12" height="12" viewBox="0 0 24.0 24.0"><circle cx="12" cy="12" r="11.500" fill="#fff"/><path d="M12 0.500a11.500 11.500 0 0 1 10 5.700h-10a5.800 5.800 0 0 0-5.500 4l-4.300-5.400a11.500 11.500 0 0 1 9.800-4.300z" fill="#e94335"/><path d="M22.300 6.800a11.500 11.500 0 0 1-9.300 16.700l5-8.600a5.800 5.800 0 0 0-0.500-8.100z" fill="#fbbc05"/><path d="M1.800 6.500l5 8.600a5.800 5.800 0 0 0 6.800 2.500l-2.600 5.800a11.500 11.500 0 0 1-9.200-16.900z" fill="#34a853"/><circle cx="12" cy="12" r="4.600" fill="#4285f4" stroke="#fff" stroke-width="1"/></svg>
<div style="position:absolute;left:238.50px;top:574.80px;width:22.00px;height:1.20px;background:#8ac0ea;"></div>
<svg style="left:270px;top:559.5px" width="12.5" height="12" viewBox="0 0 25.0 24.0"><ellipse cx="11" cy="14" rx="10" ry="8.500" fill="#c8c0b0"/><circle cx="6" cy="13" r="2" fill="#e84a3a"/><circle cx="10" cy="9.500" r="2" fill="#3a8ae8"/><circle cx="15" cy="10.500" r="2" fill="#f2c230"/><path d="M14 16l9-14 2 1.500-8 14z" fill="#e8d8a0" stroke="#8a7a4a" stroke-width="0.800"/></svg>
<div style="position:absolute;left:290.00px;top:554.00px;width:25.50px;height:22.00px;background:rgba(255,255,255,0.17);"></div>
<div style="position:absolute;left:290.00px;top:574.80px;width:25.50px;height:1.20px;background:#8ac0ea;"></div>
<svg style="left:296.2px;top:558.7px" width="13.2" height="13.2" viewBox="0 0 26.4 26.4"><rect width="21" height="21" rx="1" fill="#e0262c"/><path d="M10.500 3L15.500 10.500L10.500 18L5.500 10.500Z" fill="none" stroke="#fff" stroke-width="1.800"/><path d="M10.500 6.500v8" stroke="#fff" stroke-width="1.600"/></svg>
<svg style="left:872.5px;top:559.5px" width="14" height="13" viewBox="0 0 28.0 26.0"><circle cx="12" cy="12" r="11" fill="#1f7ad8" stroke="#fff" stroke-width="2"/><circle cx="22" cy="20" r="4.500" fill="#f2b01e"/></svg>
<span style="left:778.60px;width:200px;text-align:center;top:559.80px;font-size:10px;line-height:12px;color:#fff;font-weight:bold;">?</span>
<svg style="left:892.5px;top:563.5px" width="6.5" height="4" viewBox="0 0 13.0 8.0"><path d="M1 7l5.500-5.500 5.500 5.500" fill="none" stroke="#fff" stroke-width="1.500"/></svg>
<svg style="left:906px;top:561.5px" width="6" height="8.5" viewBox="0 0 12.0 17.0"><rect x="2.500" y="3" width="7" height="10" rx="1" fill="none" stroke="#fff" stroke-width="1.200"/><path d="M3.500 1h5M3.500 15.500h5M1 17h10" stroke="#fff" stroke-width="1.100"/><circle cx="6" cy="7" r="1.200" fill="#fff"/></svg>
<svg style="left:917.5px;top:562px" width="8.5" height="8" viewBox="0 0 17.0 16.0"><rect x="1" y="1" width="10" height="8" fill="none" stroke="#fff" stroke-width="1.300"/><path d="M4 12h4M6 9v3M13 5h3v10h-5v-3" fill="none" stroke="#fff" stroke-width="1.200"/></svg>
<svg style="left:930.5px;top:562.5px" width="8" height="7" viewBox="0 0 16.0 14.0"><path d="M1 5h3l4-4v12l-4-4h-3z" fill="none" stroke="#fff" stroke-width="1.200"/><path d="M11 4q2 3 0 6M13.500 2q3.500 5 0 10" fill="none" stroke="#8c8c8c" stroke-width="1.400"/></svg>
<span style="left:946.00px;top:561.80px;font-size:5.5px;line-height:8px;color:#f4f4f4;letter-spacing:-1.103px;">ESP</span>
<span style="left:963.80px;top:556.70px;font-size:6.1px;line-height:8px;color:#f4f4f4;letter-spacing:-0.032px;">12:46 p. m.</span>
<span style="left:966.00px;top:565.70px;font-size:6.1px;line-height:8px;color:#f4f4f4;letter-spacing:-0.142px;">8/02/2021</span>
<svg style="left:1005px;top:561.5px" width="8.5" height="8.5" viewBox="0 0 17.0 17.0"><path d="M1 1h15v11h-6l-3.500 3.500v-3.500h-5.500z" fill="none" stroke="#fff" stroke-width="1.300"/></svg>
<div style="position:absolute;left:1023.50px;top:554.00px;width:0.60px;height:22.00px;background:rgba(255,255,255,0.22);"></div>
<div style="position:absolute;left:0.00px;top:0.00px;width:2.20px;height:576.00px;background:#fbfbfb;"></div>
<div style="position:absolute;left:1025.70px;top:0.00px;width:2.30px;height:576.00px;background:#fbfbfb;"></div>
</body></html>
